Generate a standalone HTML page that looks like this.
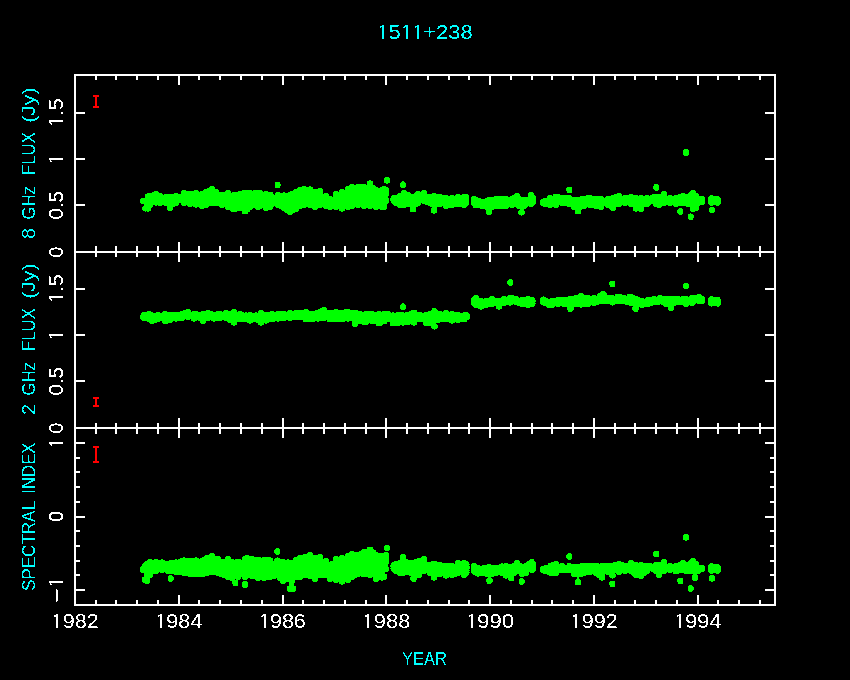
<!DOCTYPE html>
<html><head><meta charset="utf-8"><title>1511+238</title>
<style>
html,body{margin:0;padding:0;background:#000;}
body{width:850px;height:680px;overflow:hidden;}
svg{display:block;}
text{font-family:"Liberation Sans",sans-serif;}
</style></head><body>
<svg width="850" height="680" viewBox="0 0 850 680">
<rect width="850" height="680" fill="#000"/>
<g fill="#00ff00" shape-rendering="crispEdges">
<polygon points="140.0,201.0 143.0,201.0 145.6,201.0 148.0,197.0 150.0,196.0 156.0,194.4 160.0,196.4 166.0,197.4 170.0,197.4 173.0,197.0 176.0,196.4 184.0,193.4 190.0,194.4 196.0,193.4 202.0,194.4 206.0,192.4 212.0,189.4 216.0,192.4 222.0,195.0 228.0,193.4 234.0,195.4 240.0,194.4 245.0,193.0 250.0,193.4 258.0,193.4 266.0,194.4 270.0,195.0 278.0,195.4 284.0,195.8 290.0,195.4 296.0,192.4 300.0,190.4 304.0,189.4 310.0,189.8 315.0,192.4 320.0,191.4 326.0,196.4 330.0,199.4 336.0,194.4 342.0,192.4 348.0,189.4 352.0,187.4 358.0,187.4 364.0,187.4 370.0,183.8 376.0,190.4 382.0,190.4 384.0,189.4 387.0,190.4 389.4,192.4 389.4,193.6 387.0,200.6 384.0,206.6 382.0,206.6 376.0,206.6 370.0,205.6 364.0,205.6 358.0,204.6 352.0,205.6 348.0,206.6 342.0,208.2 336.0,206.6 330.0,206.6 326.0,205.6 320.0,204.6 315.0,206.6 310.0,204.6 304.0,204.6 300.0,205.6 296.0,208.6 290.0,211.6 284.0,207.6 278.0,204.6 270.0,206.6 266.0,207.6 258.0,206.6 250.0,206.6 245.0,211.0 240.0,207.6 234.0,209.0 228.0,206.6 222.0,204.6 216.0,203.0 212.0,202.6 206.0,204.6 202.0,205.6 196.0,204.2 190.0,203.6 184.0,202.6 176.0,202.6 173.0,203.6 170.0,207.6 166.0,202.6 160.0,202.6 156.0,202.2 150.0,204.6 148.0,208.2 145.6,208.2 143.0,201.0 140.0,201.0"/>
<circle cx="143.3" cy="201.0" r="3.3"/>
<circle cx="143.3" cy="201.0" r="3.3"/>
<circle cx="145.6" cy="200.9" r="3.3"/>
<circle cx="145.6" cy="208.3" r="3.3"/>
<circle cx="148.0" cy="196.9" r="3.3"/>
<circle cx="148.0" cy="208.3" r="3.3"/>
<circle cx="150.0" cy="195.9" r="3.3"/>
<circle cx="150.0" cy="204.7" r="3.3"/>
<circle cx="153.0" cy="195.6" r="3.3"/>
<circle cx="153.0" cy="200.1" r="3.3"/>
<circle cx="156.0" cy="194.3" r="3.3"/>
<circle cx="156.0" cy="202.3" r="3.3"/>
<circle cx="160.0" cy="196.3" r="3.3"/>
<circle cx="160.0" cy="202.7" r="3.3"/>
<circle cx="163.0" cy="200.2" r="3.3"/>
<circle cx="163.0" cy="202.2" r="3.3"/>
<circle cx="166.0" cy="197.3" r="3.3"/>
<circle cx="166.0" cy="202.7" r="3.3"/>
<circle cx="170.0" cy="197.3" r="3.3"/>
<circle cx="170.0" cy="207.7" r="3.3"/>
<circle cx="173.0" cy="196.9" r="3.3"/>
<circle cx="173.0" cy="203.7" r="3.3"/>
<circle cx="176.0" cy="196.3" r="3.3"/>
<circle cx="176.0" cy="202.7" r="3.3"/>
<circle cx="178.7" cy="196.8" r="3.3"/>
<circle cx="178.7" cy="199.3" r="3.3"/>
<circle cx="181.3" cy="196.8" r="3.3"/>
<circle cx="181.3" cy="199.3" r="3.3"/>
<circle cx="184.0" cy="193.3" r="3.3"/>
<circle cx="184.0" cy="202.7" r="3.3"/>
<circle cx="187.0" cy="193.8" r="3.3"/>
<circle cx="187.0" cy="199.8" r="3.3"/>
<circle cx="190.0" cy="194.3" r="3.3"/>
<circle cx="190.0" cy="203.7" r="3.3"/>
<circle cx="193.0" cy="193.8" r="3.3"/>
<circle cx="193.0" cy="201.5" r="3.3"/>
<circle cx="196.0" cy="193.3" r="3.3"/>
<circle cx="196.0" cy="204.3" r="3.3"/>
<circle cx="199.0" cy="195.3" r="3.3"/>
<circle cx="199.0" cy="201.6" r="3.3"/>
<circle cx="202.0" cy="194.3" r="3.3"/>
<circle cx="202.0" cy="205.7" r="3.3"/>
<circle cx="206.0" cy="192.3" r="3.3"/>
<circle cx="206.0" cy="204.7" r="3.3"/>
<circle cx="209.0" cy="191.3" r="3.3"/>
<circle cx="209.0" cy="203.2" r="3.3"/>
<circle cx="212.0" cy="189.3" r="3.3"/>
<circle cx="212.0" cy="202.7" r="3.3"/>
<circle cx="216.0" cy="192.3" r="3.3"/>
<circle cx="216.0" cy="203.1" r="3.3"/>
<circle cx="219.0" cy="196.1" r="3.3"/>
<circle cx="219.0" cy="200.5" r="3.3"/>
<circle cx="222.0" cy="194.9" r="3.3"/>
<circle cx="222.0" cy="204.7" r="3.3"/>
<circle cx="225.0" cy="197.5" r="3.3"/>
<circle cx="225.0" cy="203.2" r="3.3"/>
<circle cx="228.0" cy="193.3" r="3.3"/>
<circle cx="228.0" cy="206.7" r="3.3"/>
<circle cx="231.0" cy="196.8" r="3.3"/>
<circle cx="231.0" cy="207.4" r="3.3"/>
<circle cx="234.0" cy="195.3" r="3.3"/>
<circle cx="234.0" cy="209.1" r="3.3"/>
<circle cx="237.0" cy="195.3" r="3.3"/>
<circle cx="237.0" cy="207.9" r="3.3"/>
<circle cx="240.0" cy="194.3" r="3.3"/>
<circle cx="240.0" cy="207.7" r="3.3"/>
<circle cx="242.5" cy="197.0" r="3.3"/>
<circle cx="242.5" cy="206.9" r="3.3"/>
<circle cx="245.0" cy="192.9" r="3.3"/>
<circle cx="245.0" cy="211.1" r="3.3"/>
<circle cx="247.5" cy="193.1" r="3.3"/>
<circle cx="247.5" cy="208.9" r="3.3"/>
<circle cx="250.0" cy="193.3" r="3.3"/>
<circle cx="250.0" cy="206.7" r="3.3"/>
<circle cx="252.7" cy="193.8" r="3.3"/>
<circle cx="252.7" cy="203.3" r="3.3"/>
<circle cx="255.3" cy="193.3" r="3.3"/>
<circle cx="255.3" cy="205.2" r="3.3"/>
<circle cx="258.0" cy="193.3" r="3.3"/>
<circle cx="258.0" cy="206.7" r="3.3"/>
<circle cx="260.7" cy="193.6" r="3.3"/>
<circle cx="260.7" cy="205.5" r="3.3"/>
<circle cx="263.3" cy="196.5" r="3.3"/>
<circle cx="263.3" cy="204.0" r="3.3"/>
<circle cx="266.0" cy="194.3" r="3.3"/>
<circle cx="266.0" cy="207.7" r="3.3"/>
<circle cx="270.0" cy="194.9" r="3.3"/>
<circle cx="270.0" cy="206.7" r="3.3"/>
<circle cx="272.7" cy="197.5" r="3.3"/>
<circle cx="272.7" cy="203.5" r="3.3"/>
<circle cx="275.3" cy="197.7" r="3.3"/>
<circle cx="275.3" cy="202.0" r="3.3"/>
<circle cx="278.0" cy="195.3" r="3.3"/>
<circle cx="278.0" cy="204.7" r="3.3"/>
<circle cx="281.0" cy="198.0" r="3.3"/>
<circle cx="281.0" cy="205.7" r="3.3"/>
<circle cx="284.0" cy="195.7" r="3.3"/>
<circle cx="284.0" cy="207.7" r="3.3"/>
<circle cx="287.0" cy="197.0" r="3.3"/>
<circle cx="287.0" cy="209.7" r="3.3"/>
<circle cx="290.0" cy="195.3" r="3.3"/>
<circle cx="290.0" cy="211.7" r="3.3"/>
<circle cx="293.0" cy="193.8" r="3.3"/>
<circle cx="293.0" cy="209.7" r="3.3"/>
<circle cx="296.0" cy="192.3" r="3.3"/>
<circle cx="296.0" cy="208.7" r="3.3"/>
<circle cx="300.0" cy="190.3" r="3.3"/>
<circle cx="300.0" cy="205.7" r="3.3"/>
<circle cx="304.0" cy="189.3" r="3.3"/>
<circle cx="304.0" cy="204.7" r="3.3"/>
<circle cx="307.0" cy="192.0" r="3.3"/>
<circle cx="307.0" cy="204.2" r="3.3"/>
<circle cx="310.0" cy="189.7" r="3.3"/>
<circle cx="310.0" cy="204.7" r="3.3"/>
<circle cx="312.5" cy="192.5" r="3.3"/>
<circle cx="312.5" cy="203.2" r="3.3"/>
<circle cx="315.0" cy="192.3" r="3.3"/>
<circle cx="315.0" cy="206.7" r="3.3"/>
<circle cx="317.5" cy="193.3" r="3.3"/>
<circle cx="317.5" cy="203.2" r="3.3"/>
<circle cx="320.0" cy="191.3" r="3.3"/>
<circle cx="320.0" cy="204.7" r="3.3"/>
<circle cx="323.0" cy="197.2" r="3.3"/>
<circle cx="323.0" cy="202.7" r="3.3"/>
<circle cx="326.0" cy="196.3" r="3.3"/>
<circle cx="326.0" cy="205.7" r="3.3"/>
<circle cx="330.0" cy="199.3" r="3.3"/>
<circle cx="330.0" cy="206.7" r="3.3"/>
<circle cx="333.0" cy="200.2" r="3.3"/>
<circle cx="333.0" cy="205.2" r="3.3"/>
<circle cx="336.0" cy="194.3" r="3.3"/>
<circle cx="336.0" cy="206.7" r="3.3"/>
<circle cx="339.0" cy="196.7" r="3.3"/>
<circle cx="339.0" cy="204.1" r="3.3"/>
<circle cx="342.0" cy="192.3" r="3.3"/>
<circle cx="342.0" cy="208.3" r="3.3"/>
<circle cx="345.0" cy="193.3" r="3.3"/>
<circle cx="345.0" cy="204.1" r="3.3"/>
<circle cx="348.0" cy="189.3" r="3.3"/>
<circle cx="348.0" cy="206.7" r="3.3"/>
<circle cx="352.0" cy="187.3" r="3.3"/>
<circle cx="352.0" cy="205.7" r="3.3"/>
<circle cx="355.0" cy="187.8" r="3.3"/>
<circle cx="355.0" cy="203.7" r="3.3"/>
<circle cx="358.0" cy="187.3" r="3.3"/>
<circle cx="358.0" cy="204.7" r="3.3"/>
<circle cx="361.0" cy="187.3" r="3.3"/>
<circle cx="361.0" cy="203.7" r="3.3"/>
<circle cx="364.0" cy="187.3" r="3.3"/>
<circle cx="364.0" cy="205.7" r="3.3"/>
<circle cx="367.0" cy="188.9" r="3.3"/>
<circle cx="367.0" cy="205.2" r="3.3"/>
<circle cx="370.0" cy="183.7" r="3.3"/>
<circle cx="370.0" cy="205.7" r="3.3"/>
<circle cx="373.0" cy="188.5" r="3.3"/>
<circle cx="373.0" cy="202.8" r="3.3"/>
<circle cx="376.0" cy="190.3" r="3.3"/>
<circle cx="376.0" cy="206.7" r="3.3"/>
<circle cx="379.0" cy="193.7" r="3.3"/>
<circle cx="379.0" cy="203.3" r="3.3"/>
<circle cx="382.0" cy="190.3" r="3.3"/>
<circle cx="382.0" cy="206.7" r="3.3"/>
<circle cx="384.0" cy="189.3" r="3.3"/>
<circle cx="384.0" cy="206.7" r="3.3"/>
<circle cx="386.1" cy="190.3" r="3.3"/>
<circle cx="386.1" cy="200.7" r="3.3"/>
<circle cx="386.1" cy="192.3" r="3.3"/>
<circle cx="386.1" cy="193.7" r="3.3"/>
<polygon points="390.4,198.4 396.0,198.4 400.0,196.4 404.0,193.4 408.0,195.4 410.6,197.0 413.0,197.4 416.0,196.4 418.0,194.4 424.0,193.4 430.0,197.4 432.0,197.0 434.0,196.4 436.6,197.0 440.0,197.4 446.0,198.4 452.0,198.4 458.0,197.4 464.0,197.4 468.0,197.4 469.2,199.4 469.2,200.6 468.0,202.6 464.0,204.6 458.0,203.6 452.0,204.6 446.0,205.6 440.0,203.6 436.6,204.2 434.0,210.2 432.0,203.6 430.0,202.6 424.0,200.6 418.0,202.6 416.0,203.6 413.0,209.0 410.6,203.6 408.0,203.6 404.0,204.6 400.0,204.6 396.0,202.6 390.4,199.6"/>
<circle cx="393.7" cy="198.3" r="3.3"/>
<circle cx="393.7" cy="199.7" r="3.3"/>
<circle cx="393.7" cy="198.3" r="3.3"/>
<circle cx="393.7" cy="200.7" r="3.3"/>
<circle cx="396.0" cy="198.3" r="3.3"/>
<circle cx="396.0" cy="202.7" r="3.3"/>
<circle cx="400.0" cy="196.3" r="3.3"/>
<circle cx="400.0" cy="204.7" r="3.3"/>
<circle cx="404.0" cy="193.3" r="3.3"/>
<circle cx="404.0" cy="204.7" r="3.3"/>
<circle cx="408.0" cy="195.3" r="3.3"/>
<circle cx="408.0" cy="203.7" r="3.3"/>
<circle cx="410.6" cy="196.9" r="3.3"/>
<circle cx="410.6" cy="203.7" r="3.3"/>
<circle cx="413.0" cy="197.3" r="3.3"/>
<circle cx="413.0" cy="209.1" r="3.3"/>
<circle cx="416.0" cy="196.3" r="3.3"/>
<circle cx="416.0" cy="203.7" r="3.3"/>
<circle cx="418.0" cy="194.3" r="3.3"/>
<circle cx="418.0" cy="202.7" r="3.3"/>
<circle cx="421.0" cy="197.2" r="3.3"/>
<circle cx="421.0" cy="200.2" r="3.3"/>
<circle cx="424.0" cy="193.3" r="3.3"/>
<circle cx="424.0" cy="200.7" r="3.3"/>
<circle cx="427.0" cy="196.8" r="3.3"/>
<circle cx="427.0" cy="201.7" r="3.3"/>
<circle cx="430.0" cy="197.3" r="3.3"/>
<circle cx="430.0" cy="202.7" r="3.3"/>
<circle cx="432.0" cy="196.9" r="3.3"/>
<circle cx="432.0" cy="203.7" r="3.3"/>
<circle cx="434.0" cy="196.3" r="3.3"/>
<circle cx="434.0" cy="210.3" r="3.3"/>
<circle cx="436.6" cy="196.9" r="3.3"/>
<circle cx="436.6" cy="204.3" r="3.3"/>
<circle cx="440.0" cy="197.3" r="3.3"/>
<circle cx="440.0" cy="203.7" r="3.3"/>
<circle cx="443.0" cy="197.8" r="3.3"/>
<circle cx="443.0" cy="202.2" r="3.3"/>
<circle cx="446.0" cy="198.3" r="3.3"/>
<circle cx="446.0" cy="205.7" r="3.3"/>
<circle cx="449.0" cy="200.8" r="3.3"/>
<circle cx="449.0" cy="205.2" r="3.3"/>
<circle cx="452.0" cy="198.3" r="3.3"/>
<circle cx="452.0" cy="204.7" r="3.3"/>
<circle cx="455.0" cy="199.3" r="3.3"/>
<circle cx="455.0" cy="204.2" r="3.3"/>
<circle cx="458.0" cy="197.3" r="3.3"/>
<circle cx="458.0" cy="203.7" r="3.3"/>
<circle cx="461.0" cy="199.8" r="3.3"/>
<circle cx="461.0" cy="203.7" r="3.3"/>
<circle cx="464.0" cy="197.3" r="3.3"/>
<circle cx="464.0" cy="204.7" r="3.3"/>
<circle cx="465.9" cy="197.3" r="3.3"/>
<circle cx="465.9" cy="202.7" r="3.3"/>
<circle cx="465.9" cy="199.3" r="3.3"/>
<circle cx="465.9" cy="200.7" r="3.3"/>
<polygon points="471.0,201.0 472.0,199.4 476.0,200.4 482.0,202.4 487.0,201.4 489.0,200.4 492.0,200.4 496.0,199.4 502.0,199.0 506.0,199.4 512.0,199.4 517.0,196.4 519.0,199.4 521.6,200.4 524.4,200.4 526.0,200.4 531.0,195.4 535.0,198.4 536.0,200.0 536.0,200.0 535.0,201.6 531.0,203.6 526.0,203.6 524.4,205.6 521.6,212.2 519.0,205.6 517.0,203.6 512.0,204.6 506.0,205.6 502.0,205.6 496.0,205.6 492.0,206.6 489.0,211.6 487.0,206.6 482.0,205.6 476.0,205.0 472.0,202.6 471.0,201.0"/>
<circle cx="474.3" cy="201.0" r="3.3"/>
<circle cx="474.3" cy="199.3" r="3.3"/>
<circle cx="474.3" cy="202.7" r="3.3"/>
<circle cx="476.0" cy="200.3" r="3.3"/>
<circle cx="476.0" cy="205.1" r="3.3"/>
<circle cx="479.0" cy="201.3" r="3.3"/>
<circle cx="479.0" cy="203.9" r="3.3"/>
<circle cx="482.0" cy="202.3" r="3.3"/>
<circle cx="482.0" cy="205.7" r="3.3"/>
<circle cx="484.5" cy="204.3" r="3.3"/>
<circle cx="484.5" cy="203.7" r="3.3"/>
<circle cx="487.0" cy="201.3" r="3.3"/>
<circle cx="487.0" cy="206.7" r="3.3"/>
<circle cx="489.0" cy="200.3" r="3.3"/>
<circle cx="489.0" cy="211.7" r="3.3"/>
<circle cx="492.0" cy="200.3" r="3.3"/>
<circle cx="492.0" cy="206.7" r="3.3"/>
<circle cx="496.0" cy="199.3" r="3.3"/>
<circle cx="496.0" cy="205.7" r="3.3"/>
<circle cx="499.0" cy="199.1" r="3.3"/>
<circle cx="499.0" cy="205.7" r="3.3"/>
<circle cx="502.0" cy="198.9" r="3.3"/>
<circle cx="502.0" cy="205.7" r="3.3"/>
<circle cx="506.0" cy="199.3" r="3.3"/>
<circle cx="506.0" cy="205.7" r="3.3"/>
<circle cx="509.0" cy="202.7" r="3.3"/>
<circle cx="509.0" cy="201.8" r="3.3"/>
<circle cx="512.0" cy="199.3" r="3.3"/>
<circle cx="512.0" cy="204.7" r="3.3"/>
<circle cx="514.5" cy="197.8" r="3.3"/>
<circle cx="514.5" cy="201.7" r="3.3"/>
<circle cx="517.0" cy="196.3" r="3.3"/>
<circle cx="517.0" cy="203.7" r="3.3"/>
<circle cx="519.0" cy="199.3" r="3.3"/>
<circle cx="519.0" cy="205.7" r="3.3"/>
<circle cx="521.6" cy="200.3" r="3.3"/>
<circle cx="521.6" cy="212.3" r="3.3"/>
<circle cx="524.4" cy="200.3" r="3.3"/>
<circle cx="524.4" cy="205.7" r="3.3"/>
<circle cx="526.0" cy="200.3" r="3.3"/>
<circle cx="526.0" cy="203.7" r="3.3"/>
<circle cx="528.5" cy="201.2" r="3.3"/>
<circle cx="528.5" cy="202.2" r="3.3"/>
<circle cx="531.0" cy="195.3" r="3.3"/>
<circle cx="531.0" cy="203.7" r="3.3"/>
<circle cx="532.7" cy="198.3" r="3.3"/>
<circle cx="532.7" cy="201.7" r="3.3"/>
<circle cx="532.7" cy="200.0" r="3.3"/>
<polygon points="540.0,202.5 540.4,202.4 545.0,201.4 550.0,198.4 556.0,197.0 562.0,198.4 569.4,198.4 574.0,200.4 575.6,200.4 578.0,200.4 580.4,199.8 584.0,199.0 590.0,198.4 596.0,199.0 601.0,199.4 608.0,199.4 613.0,198.4 619.0,196.4 625.0,198.4 631.0,197.4 636.0,198.4 640.0,199.4 641.0,198.4 647.0,198.4 656.0,197.4 659.0,197.4 664.0,194.4 670.0,198.4 676.0,198.4 680.0,197.4 683.0,196.4 688.0,197.4 691.0,195.4 693.0,193.4 696.0,196.4 698.0,199.4 702.0,199.4 705.0,200.0 705.0,200.0 702.0,201.6 698.0,202.6 696.0,207.6 693.0,208.6 691.0,203.6 688.0,203.6 683.0,202.6 680.0,202.6 676.0,203.6 670.0,202.6 664.0,202.6 659.0,204.6 656.0,203.6 647.0,203.6 641.0,208.6 640.0,208.2 636.0,208.2 631.0,203.6 625.0,202.6 619.0,203.6 613.0,207.6 608.0,204.6 601.0,206.6 596.0,205.6 590.0,204.6 584.0,205.6 580.4,206.6 578.0,211.0 575.6,206.6 574.0,206.6 569.4,203.6 562.0,202.6 556.0,204.6 550.0,204.6 545.0,203.6 540.4,202.6 540.0,202.5"/>
<circle cx="543.3" cy="202.5" r="3.3"/>
<circle cx="543.3" cy="202.3" r="3.3"/>
<circle cx="543.3" cy="202.7" r="3.3"/>
<circle cx="545.0" cy="201.3" r="3.3"/>
<circle cx="545.0" cy="203.7" r="3.3"/>
<circle cx="547.5" cy="203.2" r="3.3"/>
<circle cx="547.5" cy="202.7" r="3.3"/>
<circle cx="550.0" cy="198.3" r="3.3"/>
<circle cx="550.0" cy="204.7" r="3.3"/>
<circle cx="553.0" cy="201.0" r="3.3"/>
<circle cx="553.0" cy="204.2" r="3.3"/>
<circle cx="556.0" cy="196.9" r="3.3"/>
<circle cx="556.0" cy="204.7" r="3.3"/>
<circle cx="559.0" cy="197.6" r="3.3"/>
<circle cx="559.0" cy="202.2" r="3.3"/>
<circle cx="562.0" cy="198.3" r="3.3"/>
<circle cx="562.0" cy="202.7" r="3.3"/>
<circle cx="565.7" cy="198.3" r="3.3"/>
<circle cx="565.7" cy="203.2" r="3.3"/>
<circle cx="569.4" cy="198.3" r="3.3"/>
<circle cx="569.4" cy="203.7" r="3.3"/>
<circle cx="574.0" cy="200.3" r="3.3"/>
<circle cx="574.0" cy="206.7" r="3.3"/>
<circle cx="575.6" cy="200.3" r="3.3"/>
<circle cx="575.6" cy="206.7" r="3.3"/>
<circle cx="578.0" cy="200.3" r="3.3"/>
<circle cx="578.0" cy="211.1" r="3.3"/>
<circle cx="580.4" cy="199.7" r="3.3"/>
<circle cx="580.4" cy="206.7" r="3.3"/>
<circle cx="584.0" cy="198.9" r="3.3"/>
<circle cx="584.0" cy="205.7" r="3.3"/>
<circle cx="587.0" cy="198.6" r="3.3"/>
<circle cx="587.0" cy="201.8" r="3.3"/>
<circle cx="590.0" cy="198.3" r="3.3"/>
<circle cx="590.0" cy="204.7" r="3.3"/>
<circle cx="593.0" cy="202.0" r="3.3"/>
<circle cx="593.0" cy="205.2" r="3.3"/>
<circle cx="596.0" cy="198.9" r="3.3"/>
<circle cx="596.0" cy="205.7" r="3.3"/>
<circle cx="598.5" cy="199.6" r="3.3"/>
<circle cx="598.5" cy="203.7" r="3.3"/>
<circle cx="601.0" cy="199.3" r="3.3"/>
<circle cx="601.0" cy="206.7" r="3.3"/>
<circle cx="604.5" cy="200.8" r="3.3"/>
<circle cx="604.5" cy="202.3" r="3.3"/>
<circle cx="608.0" cy="199.3" r="3.3"/>
<circle cx="608.0" cy="204.7" r="3.3"/>
<circle cx="610.5" cy="200.3" r="3.3"/>
<circle cx="610.5" cy="205.7" r="3.3"/>
<circle cx="613.0" cy="198.3" r="3.3"/>
<circle cx="613.0" cy="207.7" r="3.3"/>
<circle cx="616.0" cy="197.3" r="3.3"/>
<circle cx="616.0" cy="204.2" r="3.3"/>
<circle cx="619.0" cy="196.3" r="3.3"/>
<circle cx="619.0" cy="203.7" r="3.3"/>
<circle cx="622.0" cy="198.8" r="3.3"/>
<circle cx="622.0" cy="201.7" r="3.3"/>
<circle cx="625.0" cy="198.3" r="3.3"/>
<circle cx="625.0" cy="202.7" r="3.3"/>
<circle cx="628.0" cy="198.3" r="3.3"/>
<circle cx="628.0" cy="200.7" r="3.3"/>
<circle cx="631.0" cy="197.3" r="3.3"/>
<circle cx="631.0" cy="203.7" r="3.3"/>
<circle cx="633.5" cy="200.3" r="3.3"/>
<circle cx="633.5" cy="203.5" r="3.3"/>
<circle cx="636.0" cy="198.3" r="3.3"/>
<circle cx="636.0" cy="208.3" r="3.3"/>
<circle cx="640.0" cy="199.3" r="3.3"/>
<circle cx="640.0" cy="208.3" r="3.3"/>
<circle cx="641.0" cy="198.3" r="3.3"/>
<circle cx="641.0" cy="208.7" r="3.3"/>
<circle cx="644.0" cy="201.7" r="3.3"/>
<circle cx="644.0" cy="203.7" r="3.3"/>
<circle cx="647.0" cy="198.3" r="3.3"/>
<circle cx="647.0" cy="203.7" r="3.3"/>
<circle cx="650.0" cy="201.4" r="3.3"/>
<circle cx="650.0" cy="200.3" r="3.3"/>
<circle cx="653.0" cy="197.6" r="3.3"/>
<circle cx="653.0" cy="200.3" r="3.3"/>
<circle cx="656.0" cy="197.3" r="3.3"/>
<circle cx="656.0" cy="203.7" r="3.3"/>
<circle cx="659.0" cy="197.3" r="3.3"/>
<circle cx="659.0" cy="204.7" r="3.3"/>
<circle cx="661.5" cy="199.2" r="3.3"/>
<circle cx="661.5" cy="202.2" r="3.3"/>
<circle cx="664.0" cy="194.3" r="3.3"/>
<circle cx="664.0" cy="202.7" r="3.3"/>
<circle cx="667.0" cy="198.8" r="3.3"/>
<circle cx="667.0" cy="202.2" r="3.3"/>
<circle cx="670.0" cy="198.3" r="3.3"/>
<circle cx="670.0" cy="202.7" r="3.3"/>
<circle cx="673.0" cy="199.8" r="3.3"/>
<circle cx="673.0" cy="200.7" r="3.3"/>
<circle cx="676.0" cy="198.3" r="3.3"/>
<circle cx="676.0" cy="203.7" r="3.3"/>
<circle cx="680.0" cy="197.3" r="3.3"/>
<circle cx="680.0" cy="202.7" r="3.3"/>
<circle cx="683.0" cy="196.3" r="3.3"/>
<circle cx="683.0" cy="202.7" r="3.3"/>
<circle cx="685.5" cy="198.3" r="3.3"/>
<circle cx="685.5" cy="199.8" r="3.3"/>
<circle cx="688.0" cy="197.3" r="3.3"/>
<circle cx="688.0" cy="203.7" r="3.3"/>
<circle cx="691.0" cy="195.3" r="3.3"/>
<circle cx="691.0" cy="203.7" r="3.3"/>
<circle cx="693.0" cy="193.3" r="3.3"/>
<circle cx="693.0" cy="208.7" r="3.3"/>
<circle cx="696.0" cy="196.3" r="3.3"/>
<circle cx="696.0" cy="207.7" r="3.3"/>
<circle cx="698.0" cy="199.3" r="3.3"/>
<circle cx="698.0" cy="202.7" r="3.3"/>
<circle cx="701.7" cy="199.3" r="3.3"/>
<circle cx="701.7" cy="201.7" r="3.3"/>
<circle cx="701.7" cy="200.0" r="3.3"/>
<polygon points="140.0,317.0 144.0,315.4 149.0,314.4 152.0,315.8 158.0,315.4 165.0,314.4 170.0,315.0 176.0,315.0 182.0,314.4 188.0,312.4 194.0,314.4 200.0,315.4 203.0,314.4 208.0,313.4 214.0,315.0 220.0,314.4 226.0,313.4 230.0,314.4 234.0,312.4 240.0,314.4 246.0,315.8 250.0,315.4 256.0,315.8 261.0,313.4 266.0,315.0 272.0,314.4 278.0,314.4 284.0,314.4 290.0,313.4 296.0,313.4 300.0,313.0 306.0,312.4 312.0,314.4 318.0,313.0 324.0,310.4 330.0,313.0 336.0,312.4 342.0,313.0 348.0,312.4 355.0,313.0 360.0,314.4 366.0,314.4 372.0,314.4 379.0,314.4 384.0,314.4 388.0,314.4 389.6,315.8 393.0,315.8 398.0,315.4 403.0,315.8 408.0,315.0 414.0,313.0 420.0,315.4 426.0,315.4 430.0,314.4 434.4,311.4 440.0,314.4 446.0,313.4 452.0,314.4 458.0,315.4 464.0,315.8 469.0,316.4 470.0,316.7 470.0,316.7 469.0,316.6 464.0,319.0 458.0,319.6 452.0,320.2 446.0,319.0 440.0,319.0 434.4,326.2 430.0,322.6 426.0,322.6 420.0,319.0 414.0,322.2 408.0,321.6 403.0,322.2 398.0,322.6 393.0,323.0 389.6,319.0 388.0,319.0 384.0,321.0 379.0,323.0 372.0,320.6 366.0,321.6 360.0,321.0 355.0,323.6 348.0,318.2 342.0,319.0 336.0,319.0 330.0,319.0 324.0,317.6 318.0,318.2 312.0,319.0 306.0,319.0 300.0,316.6 296.0,317.0 290.0,317.6 284.0,317.6 278.0,318.2 272.0,319.0 266.0,320.2 261.0,322.2 256.0,319.0 250.0,320.2 246.0,319.0 240.0,319.0 234.0,322.2 230.0,319.6 226.0,317.6 220.0,317.6 214.0,318.2 208.0,317.6 203.0,320.6 200.0,317.6 194.0,318.2 188.0,316.6 182.0,317.6 176.0,318.2 170.0,319.6 165.0,320.6 158.0,318.6 152.0,320.6 149.0,318.6 144.0,317.6 140.0,317.0"/>
<circle cx="143.3" cy="317.0" r="3.3"/>
<circle cx="144.0" cy="315.3" r="3.3"/>
<circle cx="144.0" cy="317.7" r="3.3"/>
<circle cx="146.5" cy="316.3" r="3.3"/>
<circle cx="146.5" cy="314.8" r="3.3"/>
<circle cx="149.0" cy="314.3" r="3.3"/>
<circle cx="149.0" cy="318.7" r="3.3"/>
<circle cx="152.0" cy="315.7" r="3.3"/>
<circle cx="152.0" cy="320.7" r="3.3"/>
<circle cx="155.0" cy="317.0" r="3.3"/>
<circle cx="155.0" cy="319.7" r="3.3"/>
<circle cx="158.0" cy="315.3" r="3.3"/>
<circle cx="158.0" cy="318.7" r="3.3"/>
<circle cx="161.5" cy="317.3" r="3.3"/>
<circle cx="161.5" cy="316.3" r="3.3"/>
<circle cx="165.0" cy="314.3" r="3.3"/>
<circle cx="165.0" cy="320.7" r="3.3"/>
<circle cx="167.5" cy="316.1" r="3.3"/>
<circle cx="167.5" cy="320.2" r="3.3"/>
<circle cx="170.0" cy="314.9" r="3.3"/>
<circle cx="170.0" cy="319.7" r="3.3"/>
<circle cx="173.0" cy="317.4" r="3.3"/>
<circle cx="173.0" cy="315.6" r="3.3"/>
<circle cx="176.0" cy="314.9" r="3.3"/>
<circle cx="176.0" cy="318.3" r="3.3"/>
<circle cx="179.0" cy="318.0" r="3.3"/>
<circle cx="179.0" cy="317.5" r="3.3"/>
<circle cx="182.0" cy="314.3" r="3.3"/>
<circle cx="182.0" cy="317.7" r="3.3"/>
<circle cx="185.0" cy="313.3" r="3.3"/>
<circle cx="185.0" cy="315.7" r="3.3"/>
<circle cx="188.0" cy="312.3" r="3.3"/>
<circle cx="188.0" cy="316.7" r="3.3"/>
<circle cx="191.0" cy="315.8" r="3.3"/>
<circle cx="191.0" cy="316.0" r="3.3"/>
<circle cx="194.0" cy="314.3" r="3.3"/>
<circle cx="194.0" cy="318.3" r="3.3"/>
<circle cx="197.0" cy="316.3" r="3.3"/>
<circle cx="197.0" cy="314.6" r="3.3"/>
<circle cx="200.0" cy="315.3" r="3.3"/>
<circle cx="200.0" cy="317.7" r="3.3"/>
<circle cx="203.0" cy="314.3" r="3.3"/>
<circle cx="203.0" cy="320.7" r="3.3"/>
<circle cx="205.5" cy="315.3" r="3.3"/>
<circle cx="205.5" cy="316.7" r="3.3"/>
<circle cx="208.0" cy="313.3" r="3.3"/>
<circle cx="208.0" cy="317.7" r="3.3"/>
<circle cx="211.0" cy="314.1" r="3.3"/>
<circle cx="211.0" cy="314.6" r="3.3"/>
<circle cx="214.0" cy="314.9" r="3.3"/>
<circle cx="214.0" cy="318.3" r="3.3"/>
<circle cx="217.0" cy="314.6" r="3.3"/>
<circle cx="217.0" cy="318.0" r="3.3"/>
<circle cx="220.0" cy="314.3" r="3.3"/>
<circle cx="220.0" cy="317.7" r="3.3"/>
<circle cx="223.0" cy="315.3" r="3.3"/>
<circle cx="223.0" cy="316.2" r="3.3"/>
<circle cx="226.0" cy="313.3" r="3.3"/>
<circle cx="226.0" cy="317.7" r="3.3"/>
<circle cx="230.0" cy="314.3" r="3.3"/>
<circle cx="230.0" cy="319.7" r="3.3"/>
<circle cx="234.0" cy="312.3" r="3.3"/>
<circle cx="234.0" cy="322.3" r="3.3"/>
<circle cx="237.0" cy="315.8" r="3.3"/>
<circle cx="237.0" cy="319.2" r="3.3"/>
<circle cx="240.0" cy="314.3" r="3.3"/>
<circle cx="240.0" cy="319.1" r="3.3"/>
<circle cx="243.0" cy="318.4" r="3.3"/>
<circle cx="243.0" cy="315.7" r="3.3"/>
<circle cx="246.0" cy="315.7" r="3.3"/>
<circle cx="246.0" cy="319.1" r="3.3"/>
<circle cx="250.0" cy="315.3" r="3.3"/>
<circle cx="250.0" cy="320.3" r="3.3"/>
<circle cx="253.0" cy="317.0" r="3.3"/>
<circle cx="253.0" cy="319.2" r="3.3"/>
<circle cx="256.0" cy="315.7" r="3.3"/>
<circle cx="256.0" cy="319.1" r="3.3"/>
<circle cx="258.5" cy="316.0" r="3.3"/>
<circle cx="258.5" cy="320.2" r="3.3"/>
<circle cx="261.0" cy="313.3" r="3.3"/>
<circle cx="261.0" cy="322.3" r="3.3"/>
<circle cx="263.5" cy="315.6" r="3.3"/>
<circle cx="263.5" cy="319.8" r="3.3"/>
<circle cx="266.0" cy="314.9" r="3.3"/>
<circle cx="266.0" cy="320.3" r="3.3"/>
<circle cx="269.0" cy="318.0" r="3.3"/>
<circle cx="269.0" cy="318.2" r="3.3"/>
<circle cx="272.0" cy="314.3" r="3.3"/>
<circle cx="272.0" cy="319.1" r="3.3"/>
<circle cx="275.0" cy="315.8" r="3.3"/>
<circle cx="275.0" cy="316.2" r="3.3"/>
<circle cx="278.0" cy="314.3" r="3.3"/>
<circle cx="278.0" cy="318.3" r="3.3"/>
<circle cx="281.0" cy="314.3" r="3.3"/>
<circle cx="281.0" cy="318.0" r="3.3"/>
<circle cx="284.0" cy="314.3" r="3.3"/>
<circle cx="284.0" cy="317.7" r="3.3"/>
<circle cx="287.0" cy="317.2" r="3.3"/>
<circle cx="287.0" cy="317.2" r="3.3"/>
<circle cx="290.0" cy="313.3" r="3.3"/>
<circle cx="290.0" cy="317.7" r="3.3"/>
<circle cx="293.0" cy="314.8" r="3.3"/>
<circle cx="293.0" cy="314.0" r="3.3"/>
<circle cx="296.0" cy="313.3" r="3.3"/>
<circle cx="296.0" cy="317.1" r="3.3"/>
<circle cx="300.0" cy="312.9" r="3.3"/>
<circle cx="300.0" cy="316.7" r="3.3"/>
<circle cx="303.0" cy="313.1" r="3.3"/>
<circle cx="303.0" cy="316.4" r="3.3"/>
<circle cx="306.0" cy="312.3" r="3.3"/>
<circle cx="306.0" cy="319.1" r="3.3"/>
<circle cx="309.0" cy="313.8" r="3.3"/>
<circle cx="309.0" cy="317.6" r="3.3"/>
<circle cx="312.0" cy="314.3" r="3.3"/>
<circle cx="312.0" cy="319.1" r="3.3"/>
<circle cx="315.0" cy="314.1" r="3.3"/>
<circle cx="315.0" cy="316.2" r="3.3"/>
<circle cx="318.0" cy="312.9" r="3.3"/>
<circle cx="318.0" cy="318.3" r="3.3"/>
<circle cx="321.0" cy="311.6" r="3.3"/>
<circle cx="321.0" cy="318.0" r="3.3"/>
<circle cx="324.0" cy="310.3" r="3.3"/>
<circle cx="324.0" cy="317.7" r="3.3"/>
<circle cx="327.0" cy="315.0" r="3.3"/>
<circle cx="327.0" cy="316.9" r="3.3"/>
<circle cx="330.0" cy="312.9" r="3.3"/>
<circle cx="330.0" cy="319.1" r="3.3"/>
<circle cx="333.0" cy="314.1" r="3.3"/>
<circle cx="333.0" cy="318.6" r="3.3"/>
<circle cx="336.0" cy="312.3" r="3.3"/>
<circle cx="336.0" cy="319.1" r="3.3"/>
<circle cx="339.0" cy="315.1" r="3.3"/>
<circle cx="339.0" cy="318.6" r="3.3"/>
<circle cx="342.0" cy="312.9" r="3.3"/>
<circle cx="342.0" cy="319.1" r="3.3"/>
<circle cx="345.0" cy="312.6" r="3.3"/>
<circle cx="345.0" cy="317.2" r="3.3"/>
<circle cx="348.0" cy="312.3" r="3.3"/>
<circle cx="348.0" cy="318.3" r="3.3"/>
<circle cx="351.5" cy="313.1" r="3.3"/>
<circle cx="351.5" cy="317.6" r="3.3"/>
<circle cx="355.0" cy="312.9" r="3.3"/>
<circle cx="355.0" cy="323.7" r="3.3"/>
<circle cx="357.5" cy="316.1" r="3.3"/>
<circle cx="357.5" cy="320.9" r="3.3"/>
<circle cx="360.0" cy="314.3" r="3.3"/>
<circle cx="360.0" cy="321.1" r="3.3"/>
<circle cx="363.0" cy="314.8" r="3.3"/>
<circle cx="363.0" cy="321.4" r="3.3"/>
<circle cx="366.0" cy="314.3" r="3.3"/>
<circle cx="366.0" cy="321.7" r="3.3"/>
<circle cx="369.0" cy="314.3" r="3.3"/>
<circle cx="369.0" cy="317.8" r="3.3"/>
<circle cx="372.0" cy="314.3" r="3.3"/>
<circle cx="372.0" cy="320.7" r="3.3"/>
<circle cx="375.5" cy="314.8" r="3.3"/>
<circle cx="375.5" cy="320.4" r="3.3"/>
<circle cx="379.0" cy="314.3" r="3.3"/>
<circle cx="379.0" cy="323.1" r="3.3"/>
<circle cx="381.5" cy="317.7" r="3.3"/>
<circle cx="381.5" cy="321.6" r="3.3"/>
<circle cx="384.0" cy="314.3" r="3.3"/>
<circle cx="384.0" cy="321.1" r="3.3"/>
<circle cx="388.0" cy="314.3" r="3.3"/>
<circle cx="388.0" cy="319.1" r="3.3"/>
<circle cx="389.6" cy="315.7" r="3.3"/>
<circle cx="389.6" cy="319.1" r="3.3"/>
<circle cx="393.0" cy="315.7" r="3.3"/>
<circle cx="393.0" cy="323.1" r="3.3"/>
<circle cx="395.5" cy="317.0" r="3.3"/>
<circle cx="395.5" cy="321.4" r="3.3"/>
<circle cx="398.0" cy="315.3" r="3.3"/>
<circle cx="398.0" cy="322.7" r="3.3"/>
<circle cx="400.5" cy="315.5" r="3.3"/>
<circle cx="400.5" cy="319.1" r="3.3"/>
<circle cx="403.0" cy="315.7" r="3.3"/>
<circle cx="403.0" cy="322.3" r="3.3"/>
<circle cx="405.5" cy="316.8" r="3.3"/>
<circle cx="405.5" cy="318.6" r="3.3"/>
<circle cx="408.0" cy="314.9" r="3.3"/>
<circle cx="408.0" cy="321.7" r="3.3"/>
<circle cx="411.0" cy="314.4" r="3.3"/>
<circle cx="411.0" cy="319.5" r="3.3"/>
<circle cx="414.0" cy="312.9" r="3.3"/>
<circle cx="414.0" cy="322.3" r="3.3"/>
<circle cx="417.0" cy="315.6" r="3.3"/>
<circle cx="417.0" cy="317.3" r="3.3"/>
<circle cx="420.0" cy="315.3" r="3.3"/>
<circle cx="420.0" cy="319.1" r="3.3"/>
<circle cx="423.0" cy="316.8" r="3.3"/>
<circle cx="423.0" cy="318.4" r="3.3"/>
<circle cx="426.0" cy="315.3" r="3.3"/>
<circle cx="426.0" cy="322.7" r="3.3"/>
<circle cx="430.0" cy="314.3" r="3.3"/>
<circle cx="430.0" cy="322.7" r="3.3"/>
<circle cx="434.4" cy="311.3" r="3.3"/>
<circle cx="434.4" cy="326.3" r="3.3"/>
<circle cx="437.2" cy="314.3" r="3.3"/>
<circle cx="437.2" cy="320.2" r="3.3"/>
<circle cx="440.0" cy="314.3" r="3.3"/>
<circle cx="440.0" cy="319.1" r="3.3"/>
<circle cx="443.0" cy="315.3" r="3.3"/>
<circle cx="443.0" cy="316.6" r="3.3"/>
<circle cx="446.0" cy="313.3" r="3.3"/>
<circle cx="446.0" cy="319.1" r="3.3"/>
<circle cx="449.0" cy="317.2" r="3.3"/>
<circle cx="449.0" cy="317.2" r="3.3"/>
<circle cx="452.0" cy="314.3" r="3.3"/>
<circle cx="452.0" cy="320.3" r="3.3"/>
<circle cx="455.0" cy="314.8" r="3.3"/>
<circle cx="455.0" cy="317.5" r="3.3"/>
<circle cx="458.0" cy="315.3" r="3.3"/>
<circle cx="458.0" cy="319.7" r="3.3"/>
<circle cx="461.0" cy="316.0" r="3.3"/>
<circle cx="461.0" cy="318.9" r="3.3"/>
<circle cx="464.0" cy="315.7" r="3.3"/>
<circle cx="464.0" cy="319.1" r="3.3"/>
<circle cx="466.5" cy="316.0" r="3.3"/>
<circle cx="466.5" cy="315.4" r="3.3"/>
<circle cx="466.7" cy="316.3" r="3.3"/>
<circle cx="466.7" cy="316.7" r="3.3"/>
<circle cx="466.7" cy="316.7" r="3.3"/>
<polygon points="471.0,301.5 472.0,300.4 476.0,298.4 481.0,301.4 486.0,301.4 492.0,299.4 499.0,301.4 504.0,299.4 510.0,298.4 516.0,299.4 522.0,300.4 528.0,299.4 533.0,300.4 535.6,301.4 535.6,301.6 533.0,303.6 528.0,304.6 522.0,303.6 516.0,301.6 510.0,302.2 504.0,302.6 499.0,306.2 492.0,303.6 486.0,304.6 481.0,306.2 476.0,304.6 472.0,302.6 471.0,301.5"/>
<circle cx="474.3" cy="301.5" r="3.3"/>
<circle cx="474.3" cy="300.3" r="3.3"/>
<circle cx="474.3" cy="302.7" r="3.3"/>
<circle cx="476.0" cy="298.3" r="3.3"/>
<circle cx="476.0" cy="304.7" r="3.3"/>
<circle cx="478.5" cy="303.2" r="3.3"/>
<circle cx="478.5" cy="302.1" r="3.3"/>
<circle cx="481.0" cy="301.3" r="3.3"/>
<circle cx="481.0" cy="306.3" r="3.3"/>
<circle cx="483.5" cy="303.8" r="3.3"/>
<circle cx="483.5" cy="302.1" r="3.3"/>
<circle cx="486.0" cy="301.3" r="3.3"/>
<circle cx="486.0" cy="304.7" r="3.3"/>
<circle cx="489.0" cy="300.8" r="3.3"/>
<circle cx="489.0" cy="304.2" r="3.3"/>
<circle cx="492.0" cy="299.3" r="3.3"/>
<circle cx="492.0" cy="303.7" r="3.3"/>
<circle cx="495.5" cy="302.8" r="3.3"/>
<circle cx="495.5" cy="301.6" r="3.3"/>
<circle cx="499.0" cy="301.3" r="3.3"/>
<circle cx="499.0" cy="306.3" r="3.3"/>
<circle cx="501.5" cy="301.8" r="3.3"/>
<circle cx="501.5" cy="301.1" r="3.3"/>
<circle cx="504.0" cy="299.3" r="3.3"/>
<circle cx="504.0" cy="302.7" r="3.3"/>
<circle cx="507.0" cy="300.3" r="3.3"/>
<circle cx="507.0" cy="302.0" r="3.3"/>
<circle cx="510.0" cy="298.3" r="3.3"/>
<circle cx="510.0" cy="302.3" r="3.3"/>
<circle cx="513.0" cy="298.8" r="3.3"/>
<circle cx="513.0" cy="298.6" r="3.3"/>
<circle cx="516.0" cy="299.3" r="3.3"/>
<circle cx="516.0" cy="301.7" r="3.3"/>
<circle cx="519.0" cy="301.3" r="3.3"/>
<circle cx="519.0" cy="302.7" r="3.3"/>
<circle cx="522.0" cy="300.3" r="3.3"/>
<circle cx="522.0" cy="303.7" r="3.3"/>
<circle cx="525.0" cy="300.3" r="3.3"/>
<circle cx="525.0" cy="304.2" r="3.3"/>
<circle cx="528.0" cy="299.3" r="3.3"/>
<circle cx="528.0" cy="304.7" r="3.3"/>
<circle cx="530.5" cy="299.8" r="3.3"/>
<circle cx="530.5" cy="300.8" r="3.3"/>
<circle cx="532.3" cy="300.3" r="3.3"/>
<circle cx="532.3" cy="303.7" r="3.3"/>
<circle cx="532.3" cy="301.3" r="3.3"/>
<circle cx="532.3" cy="301.7" r="3.3"/>
<polygon points="540.0,302.0 541.0,302.0 546.0,301.4 552.0,301.4 558.0,300.4 564.0,300.4 568.0,300.4 570.4,299.4 573.0,299.4 576.0,298.4 581.0,296.4 588.0,298.4 594.0,298.4 600.0,296.4 603.0,294.4 604.0,295.4 609.0,298.4 612.4,298.4 618.0,297.0 624.0,298.4 630.0,297.0 633.0,298.4 635.6,299.4 638.4,300.4 642.0,301.4 648.0,300.4 654.0,299.4 660.0,298.4 666.0,299.4 668.4,299.4 671.0,299.4 674.0,299.4 678.0,299.4 686.0,299.4 692.0,298.4 699.0,297.4 703.0,299.4 705.0,300.0 705.0,300.0 703.0,301.0 699.0,300.6 692.0,302.6 686.0,303.6 678.0,301.6 674.0,302.6 671.0,307.6 668.4,303.6 666.0,303.6 660.0,301.0 654.0,301.6 648.0,303.6 642.0,304.6 638.4,303.6 635.6,308.6 633.0,302.6 630.0,302.2 624.0,301.0 618.0,301.0 612.4,302.2 609.0,300.6 604.0,300.6 603.0,300.6 600.0,300.6 594.0,302.6 588.0,303.6 581.0,304.2 576.0,303.6 573.0,303.6 570.4,308.6 568.0,303.6 564.0,303.6 558.0,303.6 552.0,304.6 546.0,302.6 541.0,302.0 540.0,302.0"/>
<circle cx="543.3" cy="302.0" r="3.3"/>
<circle cx="543.3" cy="302.0" r="3.3"/>
<circle cx="543.5" cy="302.3" r="3.3"/>
<circle cx="543.5" cy="299.7" r="3.3"/>
<circle cx="546.0" cy="301.3" r="3.3"/>
<circle cx="546.0" cy="302.7" r="3.3"/>
<circle cx="549.0" cy="304.7" r="3.3"/>
<circle cx="549.0" cy="303.7" r="3.3"/>
<circle cx="552.0" cy="301.3" r="3.3"/>
<circle cx="552.0" cy="304.7" r="3.3"/>
<circle cx="555.0" cy="300.8" r="3.3"/>
<circle cx="555.0" cy="301.7" r="3.3"/>
<circle cx="558.0" cy="300.3" r="3.3"/>
<circle cx="558.0" cy="303.7" r="3.3"/>
<circle cx="561.0" cy="300.3" r="3.3"/>
<circle cx="561.0" cy="303.2" r="3.3"/>
<circle cx="564.0" cy="300.3" r="3.3"/>
<circle cx="564.0" cy="303.7" r="3.3"/>
<circle cx="568.0" cy="300.3" r="3.3"/>
<circle cx="568.0" cy="303.7" r="3.3"/>
<circle cx="570.4" cy="299.3" r="3.3"/>
<circle cx="570.4" cy="308.7" r="3.3"/>
<circle cx="573.0" cy="299.3" r="3.3"/>
<circle cx="573.0" cy="303.7" r="3.3"/>
<circle cx="576.0" cy="298.3" r="3.3"/>
<circle cx="576.0" cy="303.7" r="3.3"/>
<circle cx="578.5" cy="300.7" r="3.3"/>
<circle cx="578.5" cy="302.5" r="3.3"/>
<circle cx="581.0" cy="296.3" r="3.3"/>
<circle cx="581.0" cy="304.3" r="3.3"/>
<circle cx="584.5" cy="297.8" r="3.3"/>
<circle cx="584.5" cy="304.0" r="3.3"/>
<circle cx="588.0" cy="298.3" r="3.3"/>
<circle cx="588.0" cy="303.7" r="3.3"/>
<circle cx="591.0" cy="301.7" r="3.3"/>
<circle cx="591.0" cy="299.8" r="3.3"/>
<circle cx="594.0" cy="298.3" r="3.3"/>
<circle cx="594.0" cy="302.7" r="3.3"/>
<circle cx="597.0" cy="299.8" r="3.3"/>
<circle cx="597.0" cy="301.7" r="3.3"/>
<circle cx="600.0" cy="296.3" r="3.3"/>
<circle cx="600.0" cy="300.7" r="3.3"/>
<circle cx="603.0" cy="294.3" r="3.3"/>
<circle cx="603.0" cy="300.7" r="3.3"/>
<circle cx="604.0" cy="295.3" r="3.3"/>
<circle cx="604.0" cy="300.7" r="3.3"/>
<circle cx="606.5" cy="300.2" r="3.3"/>
<circle cx="606.5" cy="300.7" r="3.3"/>
<circle cx="609.0" cy="298.3" r="3.3"/>
<circle cx="609.0" cy="300.7" r="3.3"/>
<circle cx="612.4" cy="298.3" r="3.3"/>
<circle cx="612.4" cy="302.3" r="3.3"/>
<circle cx="615.2" cy="299.1" r="3.3"/>
<circle cx="615.2" cy="301.2" r="3.3"/>
<circle cx="618.0" cy="296.9" r="3.3"/>
<circle cx="618.0" cy="301.1" r="3.3"/>
<circle cx="621.0" cy="299.1" r="3.3"/>
<circle cx="621.0" cy="297.7" r="3.3"/>
<circle cx="624.0" cy="298.3" r="3.3"/>
<circle cx="624.0" cy="301.1" r="3.3"/>
<circle cx="627.0" cy="300.1" r="3.3"/>
<circle cx="627.0" cy="301.7" r="3.3"/>
<circle cx="630.0" cy="296.9" r="3.3"/>
<circle cx="630.0" cy="302.3" r="3.3"/>
<circle cx="633.0" cy="298.3" r="3.3"/>
<circle cx="633.0" cy="302.7" r="3.3"/>
<circle cx="635.6" cy="299.3" r="3.3"/>
<circle cx="635.6" cy="308.7" r="3.3"/>
<circle cx="638.4" cy="300.3" r="3.3"/>
<circle cx="638.4" cy="303.7" r="3.3"/>
<circle cx="642.0" cy="301.3" r="3.3"/>
<circle cx="642.0" cy="304.7" r="3.3"/>
<circle cx="645.0" cy="302.3" r="3.3"/>
<circle cx="645.0" cy="303.7" r="3.3"/>
<circle cx="648.0" cy="300.3" r="3.3"/>
<circle cx="648.0" cy="303.7" r="3.3"/>
<circle cx="651.0" cy="300.3" r="3.3"/>
<circle cx="651.0" cy="302.7" r="3.3"/>
<circle cx="654.0" cy="299.3" r="3.3"/>
<circle cx="654.0" cy="301.7" r="3.3"/>
<circle cx="657.0" cy="302.2" r="3.3"/>
<circle cx="657.0" cy="301.4" r="3.3"/>
<circle cx="660.0" cy="298.3" r="3.3"/>
<circle cx="660.0" cy="301.1" r="3.3"/>
<circle cx="663.0" cy="299.3" r="3.3"/>
<circle cx="663.0" cy="301.9" r="3.3"/>
<circle cx="666.0" cy="299.3" r="3.3"/>
<circle cx="666.0" cy="303.7" r="3.3"/>
<circle cx="668.4" cy="299.3" r="3.3"/>
<circle cx="668.4" cy="303.7" r="3.3"/>
<circle cx="671.0" cy="299.3" r="3.3"/>
<circle cx="671.0" cy="307.7" r="3.3"/>
<circle cx="674.0" cy="299.3" r="3.3"/>
<circle cx="674.0" cy="302.7" r="3.3"/>
<circle cx="678.0" cy="299.3" r="3.3"/>
<circle cx="678.0" cy="301.7" r="3.3"/>
<circle cx="680.7" cy="300.8" r="3.3"/>
<circle cx="680.7" cy="301.9" r="3.3"/>
<circle cx="683.3" cy="299.3" r="3.3"/>
<circle cx="683.3" cy="300.5" r="3.3"/>
<circle cx="686.0" cy="299.3" r="3.3"/>
<circle cx="686.0" cy="303.7" r="3.3"/>
<circle cx="689.0" cy="302.2" r="3.3"/>
<circle cx="689.0" cy="300.7" r="3.3"/>
<circle cx="692.0" cy="298.3" r="3.3"/>
<circle cx="692.0" cy="302.7" r="3.3"/>
<circle cx="695.5" cy="297.8" r="3.3"/>
<circle cx="695.5" cy="300.2" r="3.3"/>
<circle cx="699.0" cy="297.3" r="3.3"/>
<circle cx="699.0" cy="300.7" r="3.3"/>
<circle cx="701.7" cy="299.3" r="3.3"/>
<circle cx="701.7" cy="301.1" r="3.3"/>
<circle cx="701.7" cy="300.0" r="3.3"/>
<polygon points="140.0,569.0 143.0,569.4 145.0,566.4 147.0,564.4 150.0,562.4 156.0,562.4 162.0,562.8 168.0,564.0 171.0,563.4 176.0,562.8 184.0,560.8 190.0,561.4 196.0,560.8 202.0,561.4 207.0,558.4 212.0,556.4 218.0,559.4 224.0,562.0 228.0,559.4 232.0,562.4 238.0,562.0 245.0,559.4 247.0,558.4 252.0,559.4 258.0,560.0 264.0,560.4 270.0,560.8 277.4,560.8 283.0,562.4 288.0,562.8 290.0,563.4 293.0,563.4 296.0,560.4 300.0,558.4 305.0,557.4 310.0,555.4 315.0,558.4 320.0,557.4 326.0,561.4 330.0,565.4 336.0,559.4 342.0,558.4 348.0,556.4 352.0,554.4 358.0,555.4 364.0,552.4 370.0,550.0 376.0,555.4 382.0,556.4 384.0,556.0 386.4,555.4 389.0,556.4 389.0,561.6 386.4,568.6 384.0,576.6 382.0,577.2 376.0,578.6 370.0,574.6 364.0,574.0 358.0,573.6 352.0,576.6 348.0,579.6 342.0,581.2 336.0,579.6 330.0,578.6 326.0,574.6 320.0,574.6 315.0,578.6 310.0,575.6 305.0,574.6 300.0,576.6 296.0,576.6 293.0,588.6 290.0,588.6 288.0,578.6 283.0,580.6 277.4,574.6 270.0,576.6 264.0,577.6 258.0,577.6 252.0,575.6 247.0,574.6 245.0,576.6 238.0,576.6 232.0,577.6 228.0,576.6 224.0,574.6 218.0,572.6 212.0,571.6 207.0,572.6 202.0,574.0 196.0,574.0 190.0,573.6 184.0,572.6 176.0,571.6 171.0,570.6 168.0,570.6 162.0,569.6 156.0,570.6 150.0,574.6 147.0,580.6 145.0,579.6 143.0,569.6 140.0,569.0"/>
<circle cx="143.3" cy="569.0" r="3.3"/>
<circle cx="143.3" cy="569.3" r="3.3"/>
<circle cx="143.3" cy="569.7" r="3.3"/>
<circle cx="145.0" cy="566.3" r="3.3"/>
<circle cx="145.0" cy="579.7" r="3.3"/>
<circle cx="147.0" cy="564.3" r="3.3"/>
<circle cx="147.0" cy="580.7" r="3.3"/>
<circle cx="150.0" cy="562.3" r="3.3"/>
<circle cx="150.0" cy="574.7" r="3.3"/>
<circle cx="153.0" cy="562.8" r="3.3"/>
<circle cx="153.0" cy="571.2" r="3.3"/>
<circle cx="156.0" cy="562.3" r="3.3"/>
<circle cx="156.0" cy="570.7" r="3.3"/>
<circle cx="159.0" cy="565.9" r="3.3"/>
<circle cx="159.0" cy="566.8" r="3.3"/>
<circle cx="162.0" cy="562.7" r="3.3"/>
<circle cx="162.0" cy="569.7" r="3.3"/>
<circle cx="165.0" cy="566.7" r="3.3"/>
<circle cx="165.0" cy="567.7" r="3.3"/>
<circle cx="168.0" cy="563.9" r="3.3"/>
<circle cx="168.0" cy="570.7" r="3.3"/>
<circle cx="171.0" cy="563.3" r="3.3"/>
<circle cx="171.0" cy="570.7" r="3.3"/>
<circle cx="173.5" cy="563.0" r="3.3"/>
<circle cx="173.5" cy="568.7" r="3.3"/>
<circle cx="176.0" cy="562.7" r="3.3"/>
<circle cx="176.0" cy="571.7" r="3.3"/>
<circle cx="178.7" cy="563.5" r="3.3"/>
<circle cx="178.7" cy="572.0" r="3.3"/>
<circle cx="181.3" cy="561.4" r="3.3"/>
<circle cx="181.3" cy="571.9" r="3.3"/>
<circle cx="184.0" cy="560.7" r="3.3"/>
<circle cx="184.0" cy="572.7" r="3.3"/>
<circle cx="187.0" cy="561.0" r="3.3"/>
<circle cx="187.0" cy="573.2" r="3.3"/>
<circle cx="190.0" cy="561.3" r="3.3"/>
<circle cx="190.0" cy="573.7" r="3.3"/>
<circle cx="193.0" cy="561.0" r="3.3"/>
<circle cx="193.0" cy="573.9" r="3.3"/>
<circle cx="196.0" cy="560.7" r="3.3"/>
<circle cx="196.0" cy="574.1" r="3.3"/>
<circle cx="199.0" cy="563.5" r="3.3"/>
<circle cx="199.0" cy="574.1" r="3.3"/>
<circle cx="202.0" cy="561.3" r="3.3"/>
<circle cx="202.0" cy="574.1" r="3.3"/>
<circle cx="204.5" cy="559.8" r="3.3"/>
<circle cx="204.5" cy="570.0" r="3.3"/>
<circle cx="207.0" cy="558.3" r="3.3"/>
<circle cx="207.0" cy="572.7" r="3.3"/>
<circle cx="209.5" cy="560.7" r="3.3"/>
<circle cx="209.5" cy="569.7" r="3.3"/>
<circle cx="212.0" cy="556.3" r="3.3"/>
<circle cx="212.0" cy="571.7" r="3.3"/>
<circle cx="215.0" cy="559.3" r="3.3"/>
<circle cx="215.0" cy="571.7" r="3.3"/>
<circle cx="218.0" cy="559.3" r="3.3"/>
<circle cx="218.0" cy="572.7" r="3.3"/>
<circle cx="221.0" cy="562.1" r="3.3"/>
<circle cx="221.0" cy="573.7" r="3.3"/>
<circle cx="224.0" cy="561.9" r="3.3"/>
<circle cx="224.0" cy="574.7" r="3.3"/>
<circle cx="228.0" cy="559.3" r="3.3"/>
<circle cx="228.0" cy="576.7" r="3.3"/>
<circle cx="232.0" cy="562.3" r="3.3"/>
<circle cx="232.0" cy="577.7" r="3.3"/>
<circle cx="235.0" cy="563.6" r="3.3"/>
<circle cx="235.0" cy="574.7" r="3.3"/>
<circle cx="238.0" cy="561.9" r="3.3"/>
<circle cx="238.0" cy="576.7" r="3.3"/>
<circle cx="241.5" cy="563.1" r="3.3"/>
<circle cx="241.5" cy="573.3" r="3.3"/>
<circle cx="245.0" cy="559.3" r="3.3"/>
<circle cx="245.0" cy="576.7" r="3.3"/>
<circle cx="247.0" cy="558.3" r="3.3"/>
<circle cx="247.0" cy="574.7" r="3.3"/>
<circle cx="249.5" cy="560.3" r="3.3"/>
<circle cx="249.5" cy="573.7" r="3.3"/>
<circle cx="252.0" cy="559.3" r="3.3"/>
<circle cx="252.0" cy="575.7" r="3.3"/>
<circle cx="255.0" cy="561.1" r="3.3"/>
<circle cx="255.0" cy="576.2" r="3.3"/>
<circle cx="258.0" cy="559.9" r="3.3"/>
<circle cx="258.0" cy="577.7" r="3.3"/>
<circle cx="261.0" cy="561.6" r="3.3"/>
<circle cx="261.0" cy="575.2" r="3.3"/>
<circle cx="264.0" cy="560.3" r="3.3"/>
<circle cx="264.0" cy="577.7" r="3.3"/>
<circle cx="267.0" cy="560.5" r="3.3"/>
<circle cx="267.0" cy="576.7" r="3.3"/>
<circle cx="270.0" cy="560.7" r="3.3"/>
<circle cx="270.0" cy="576.7" r="3.3"/>
<circle cx="273.7" cy="564.1" r="3.3"/>
<circle cx="273.7" cy="575.7" r="3.3"/>
<circle cx="277.4" cy="560.7" r="3.3"/>
<circle cx="277.4" cy="574.7" r="3.3"/>
<circle cx="280.2" cy="564.0" r="3.3"/>
<circle cx="280.2" cy="577.7" r="3.3"/>
<circle cx="283.0" cy="562.3" r="3.3"/>
<circle cx="283.0" cy="580.7" r="3.3"/>
<circle cx="285.5" cy="565.9" r="3.3"/>
<circle cx="285.5" cy="579.2" r="3.3"/>
<circle cx="288.0" cy="562.7" r="3.3"/>
<circle cx="288.0" cy="578.7" r="3.3"/>
<circle cx="290.0" cy="563.3" r="3.3"/>
<circle cx="290.0" cy="588.7" r="3.3"/>
<circle cx="293.0" cy="563.3" r="3.3"/>
<circle cx="293.0" cy="588.7" r="3.3"/>
<circle cx="296.0" cy="560.3" r="3.3"/>
<circle cx="296.0" cy="576.7" r="3.3"/>
<circle cx="300.0" cy="558.3" r="3.3"/>
<circle cx="300.0" cy="576.7" r="3.3"/>
<circle cx="302.5" cy="557.8" r="3.3"/>
<circle cx="302.5" cy="574.2" r="3.3"/>
<circle cx="305.0" cy="557.3" r="3.3"/>
<circle cx="305.0" cy="574.7" r="3.3"/>
<circle cx="307.5" cy="558.8" r="3.3"/>
<circle cx="307.5" cy="571.8" r="3.3"/>
<circle cx="310.0" cy="555.3" r="3.3"/>
<circle cx="310.0" cy="575.7" r="3.3"/>
<circle cx="312.5" cy="560.2" r="3.3"/>
<circle cx="312.5" cy="574.7" r="3.3"/>
<circle cx="315.0" cy="558.3" r="3.3"/>
<circle cx="315.0" cy="578.7" r="3.3"/>
<circle cx="317.5" cy="557.8" r="3.3"/>
<circle cx="317.5" cy="573.3" r="3.3"/>
<circle cx="320.0" cy="557.3" r="3.3"/>
<circle cx="320.0" cy="574.7" r="3.3"/>
<circle cx="323.0" cy="561.8" r="3.3"/>
<circle cx="323.0" cy="574.7" r="3.3"/>
<circle cx="326.0" cy="561.3" r="3.3"/>
<circle cx="326.0" cy="574.7" r="3.3"/>
<circle cx="330.0" cy="565.3" r="3.3"/>
<circle cx="330.0" cy="578.7" r="3.3"/>
<circle cx="333.0" cy="563.8" r="3.3"/>
<circle cx="333.0" cy="576.7" r="3.3"/>
<circle cx="336.0" cy="559.3" r="3.3"/>
<circle cx="336.0" cy="579.7" r="3.3"/>
<circle cx="339.0" cy="560.3" r="3.3"/>
<circle cx="339.0" cy="578.0" r="3.3"/>
<circle cx="342.0" cy="558.3" r="3.3"/>
<circle cx="342.0" cy="581.3" r="3.3"/>
<circle cx="345.0" cy="559.8" r="3.3"/>
<circle cx="345.0" cy="578.0" r="3.3"/>
<circle cx="348.0" cy="556.3" r="3.3"/>
<circle cx="348.0" cy="579.7" r="3.3"/>
<circle cx="352.0" cy="554.3" r="3.3"/>
<circle cx="352.0" cy="576.7" r="3.3"/>
<circle cx="355.0" cy="554.8" r="3.3"/>
<circle cx="355.0" cy="574.7" r="3.3"/>
<circle cx="358.0" cy="555.3" r="3.3"/>
<circle cx="358.0" cy="573.7" r="3.3"/>
<circle cx="361.0" cy="554.3" r="3.3"/>
<circle cx="361.0" cy="570.5" r="3.3"/>
<circle cx="364.0" cy="552.3" r="3.3"/>
<circle cx="364.0" cy="574.1" r="3.3"/>
<circle cx="367.0" cy="552.6" r="3.3"/>
<circle cx="367.0" cy="571.0" r="3.3"/>
<circle cx="370.0" cy="549.9" r="3.3"/>
<circle cx="370.0" cy="574.7" r="3.3"/>
<circle cx="373.0" cy="552.6" r="3.3"/>
<circle cx="373.0" cy="574.2" r="3.3"/>
<circle cx="376.0" cy="555.3" r="3.3"/>
<circle cx="376.0" cy="578.7" r="3.3"/>
<circle cx="379.0" cy="556.3" r="3.3"/>
<circle cx="379.0" cy="575.5" r="3.3"/>
<circle cx="382.0" cy="556.3" r="3.3"/>
<circle cx="382.0" cy="577.3" r="3.3"/>
<circle cx="384.0" cy="555.9" r="3.3"/>
<circle cx="384.0" cy="576.7" r="3.3"/>
<circle cx="385.7" cy="555.3" r="3.3"/>
<circle cx="385.7" cy="568.7" r="3.3"/>
<circle cx="385.7" cy="556.3" r="3.3"/>
<circle cx="385.7" cy="561.7" r="3.3"/>
<polygon points="390.4,566.0 391.0,565.4 396.0,564.4 400.0,563.4 403.0,557.4 406.0,562.4 408.0,563.4 411.0,563.4 413.6,563.4 416.4,562.4 419.0,561.4 424.0,559.4 430.0,565.4 432.0,564.8 434.0,564.4 436.6,564.8 440.0,565.4 446.0,566.4 452.0,566.4 458.0,563.4 464.0,563.4 469.0,564.4 469.6,566.4 469.6,568.6 469.0,570.6 464.0,574.6 458.0,572.6 452.0,574.6 446.0,575.2 440.0,573.6 436.6,573.6 434.0,577.2 432.0,573.2 430.0,572.6 424.0,570.6 419.0,574.6 416.4,573.6 413.6,578.6 411.0,572.6 408.0,571.6 406.0,571.6 403.0,572.6 400.0,572.6 396.0,570.6 391.0,566.6 390.4,566.0"/>
<circle cx="393.7" cy="566.0" r="3.3"/>
<circle cx="393.7" cy="565.3" r="3.3"/>
<circle cx="393.7" cy="566.7" r="3.3"/>
<circle cx="393.7" cy="565.3" r="3.3"/>
<circle cx="393.7" cy="568.7" r="3.3"/>
<circle cx="396.0" cy="564.3" r="3.3"/>
<circle cx="396.0" cy="570.7" r="3.3"/>
<circle cx="400.0" cy="563.3" r="3.3"/>
<circle cx="400.0" cy="572.7" r="3.3"/>
<circle cx="403.0" cy="557.3" r="3.3"/>
<circle cx="403.0" cy="572.7" r="3.3"/>
<circle cx="406.0" cy="562.3" r="3.3"/>
<circle cx="406.0" cy="571.7" r="3.3"/>
<circle cx="408.0" cy="563.3" r="3.3"/>
<circle cx="408.0" cy="571.7" r="3.3"/>
<circle cx="411.0" cy="563.3" r="3.3"/>
<circle cx="411.0" cy="572.7" r="3.3"/>
<circle cx="413.6" cy="563.3" r="3.3"/>
<circle cx="413.6" cy="578.7" r="3.3"/>
<circle cx="416.4" cy="562.3" r="3.3"/>
<circle cx="416.4" cy="573.7" r="3.3"/>
<circle cx="419.0" cy="561.3" r="3.3"/>
<circle cx="419.0" cy="574.7" r="3.3"/>
<circle cx="421.5" cy="561.8" r="3.3"/>
<circle cx="421.5" cy="571.2" r="3.3"/>
<circle cx="424.0" cy="559.3" r="3.3"/>
<circle cx="424.0" cy="570.7" r="3.3"/>
<circle cx="427.0" cy="565.7" r="3.3"/>
<circle cx="427.0" cy="570.2" r="3.3"/>
<circle cx="430.0" cy="565.3" r="3.3"/>
<circle cx="430.0" cy="572.7" r="3.3"/>
<circle cx="432.0" cy="564.7" r="3.3"/>
<circle cx="432.0" cy="573.3" r="3.3"/>
<circle cx="434.0" cy="564.3" r="3.3"/>
<circle cx="434.0" cy="577.3" r="3.3"/>
<circle cx="436.6" cy="564.7" r="3.3"/>
<circle cx="436.6" cy="573.7" r="3.3"/>
<circle cx="440.0" cy="565.3" r="3.3"/>
<circle cx="440.0" cy="573.7" r="3.3"/>
<circle cx="443.0" cy="565.8" r="3.3"/>
<circle cx="443.0" cy="572.0" r="3.3"/>
<circle cx="446.0" cy="566.3" r="3.3"/>
<circle cx="446.0" cy="575.3" r="3.3"/>
<circle cx="449.0" cy="566.3" r="3.3"/>
<circle cx="449.0" cy="571.6" r="3.3"/>
<circle cx="452.0" cy="566.3" r="3.3"/>
<circle cx="452.0" cy="574.7" r="3.3"/>
<circle cx="455.0" cy="567.3" r="3.3"/>
<circle cx="455.0" cy="573.7" r="3.3"/>
<circle cx="458.0" cy="563.3" r="3.3"/>
<circle cx="458.0" cy="572.7" r="3.3"/>
<circle cx="461.0" cy="564.8" r="3.3"/>
<circle cx="461.0" cy="570.3" r="3.3"/>
<circle cx="464.0" cy="563.3" r="3.3"/>
<circle cx="464.0" cy="574.7" r="3.3"/>
<circle cx="466.3" cy="567.2" r="3.3"/>
<circle cx="466.3" cy="572.7" r="3.3"/>
<circle cx="466.3" cy="564.3" r="3.3"/>
<circle cx="466.3" cy="570.7" r="3.3"/>
<circle cx="466.3" cy="566.3" r="3.3"/>
<circle cx="466.3" cy="568.7" r="3.3"/>
<polygon points="471.0,568.0 473.0,566.4 478.0,568.4 484.0,568.4 487.0,568.0 489.4,567.4 492.4,568.0 496.0,568.0 502.0,566.8 506.0,566.4 511.0,567.4 514.0,566.4 517.0,563.4 522.0,568.4 526.0,566.4 531.6,562.4 535.0,564.4 536.0,566.4 536.0,566.6 535.0,568.6 531.6,569.6 526.0,572.6 522.0,573.6 517.0,570.6 514.0,572.6 511.0,578.0 506.0,575.2 502.0,572.6 496.0,572.6 492.4,573.6 489.4,580.6 487.0,573.6 484.0,572.6 478.0,573.2 473.0,570.6 471.0,568.0"/>
<circle cx="474.3" cy="568.0" r="3.3"/>
<circle cx="474.3" cy="566.3" r="3.3"/>
<circle cx="474.3" cy="570.7" r="3.3"/>
<circle cx="475.5" cy="570.7" r="3.3"/>
<circle cx="475.5" cy="572.0" r="3.3"/>
<circle cx="478.0" cy="568.3" r="3.3"/>
<circle cx="478.0" cy="573.3" r="3.3"/>
<circle cx="481.0" cy="570.8" r="3.3"/>
<circle cx="481.0" cy="572.5" r="3.3"/>
<circle cx="484.0" cy="568.3" r="3.3"/>
<circle cx="484.0" cy="572.7" r="3.3"/>
<circle cx="487.0" cy="567.9" r="3.3"/>
<circle cx="487.0" cy="573.7" r="3.3"/>
<circle cx="489.4" cy="567.3" r="3.3"/>
<circle cx="489.4" cy="580.7" r="3.3"/>
<circle cx="492.4" cy="567.9" r="3.3"/>
<circle cx="492.4" cy="573.7" r="3.3"/>
<circle cx="496.0" cy="567.9" r="3.3"/>
<circle cx="496.0" cy="572.7" r="3.3"/>
<circle cx="499.0" cy="567.8" r="3.3"/>
<circle cx="499.0" cy="570.2" r="3.3"/>
<circle cx="502.0" cy="566.7" r="3.3"/>
<circle cx="502.0" cy="572.7" r="3.3"/>
<circle cx="506.0" cy="566.3" r="3.3"/>
<circle cx="506.0" cy="575.3" r="3.3"/>
<circle cx="508.5" cy="566.8" r="3.3"/>
<circle cx="508.5" cy="573.3" r="3.3"/>
<circle cx="511.0" cy="567.3" r="3.3"/>
<circle cx="511.0" cy="578.1" r="3.3"/>
<circle cx="514.0" cy="566.3" r="3.3"/>
<circle cx="514.0" cy="572.7" r="3.3"/>
<circle cx="517.0" cy="563.3" r="3.3"/>
<circle cx="517.0" cy="570.7" r="3.3"/>
<circle cx="519.5" cy="565.8" r="3.3"/>
<circle cx="519.5" cy="568.8" r="3.3"/>
<circle cx="522.0" cy="568.3" r="3.3"/>
<circle cx="522.0" cy="573.7" r="3.3"/>
<circle cx="526.0" cy="566.3" r="3.3"/>
<circle cx="526.0" cy="572.7" r="3.3"/>
<circle cx="528.8" cy="564.3" r="3.3"/>
<circle cx="528.8" cy="568.7" r="3.3"/>
<circle cx="531.6" cy="562.3" r="3.3"/>
<circle cx="531.6" cy="569.7" r="3.3"/>
<circle cx="532.7" cy="564.3" r="3.3"/>
<circle cx="532.7" cy="568.7" r="3.3"/>
<circle cx="532.7" cy="566.3" r="3.3"/>
<circle cx="532.7" cy="566.7" r="3.3"/>
<polygon points="540.0,569.5 541.0,569.4 546.0,568.4 551.0,566.0 556.0,564.4 562.0,566.4 569.4,566.4 574.0,567.4 575.6,567.4 578.0,567.4 580.6,566.8 584.0,566.0 590.0,566.0 596.0,566.0 602.0,566.4 608.0,566.4 612.4,566.0 619.0,564.4 625.0,566.0 631.0,563.4 636.0,565.4 640.0,566.4 641.0,565.4 647.0,566.4 656.0,565.4 659.0,565.4 664.0,562.4 670.0,566.4 676.0,566.4 680.0,565.4 683.0,563.4 688.0,565.4 691.0,563.4 693.0,561.4 696.0,564.4 698.0,568.4 702.0,568.4 705.0,568.7 705.0,568.7 702.0,569.0 698.0,570.6 696.0,570.6 693.0,570.6 691.0,571.0 688.0,571.0 683.0,569.6 680.0,569.6 676.0,571.0 670.0,569.6 664.0,570.6 659.0,574.6 656.0,570.6 647.0,570.6 641.0,575.6 640.0,574.6 636.0,574.6 631.0,570.6 625.0,570.6 619.0,571.6 612.4,575.2 608.0,571.6 602.0,577.2 596.0,572.6 590.0,571.6 584.0,572.6 580.6,573.6 578.0,582.0 575.6,573.6 574.0,573.6 569.4,569.6 562.0,569.6 556.0,572.6 551.0,572.6 546.0,570.6 541.0,569.6 540.0,569.5"/>
<circle cx="543.3" cy="569.5" r="3.3"/>
<circle cx="543.3" cy="569.3" r="3.3"/>
<circle cx="543.3" cy="569.7" r="3.3"/>
<circle cx="543.5" cy="569.3" r="3.3"/>
<circle cx="543.5" cy="570.2" r="3.3"/>
<circle cx="546.0" cy="568.3" r="3.3"/>
<circle cx="546.0" cy="570.7" r="3.3"/>
<circle cx="548.5" cy="568.6" r="3.3"/>
<circle cx="548.5" cy="571.7" r="3.3"/>
<circle cx="551.0" cy="565.9" r="3.3"/>
<circle cx="551.0" cy="572.7" r="3.3"/>
<circle cx="553.5" cy="565.1" r="3.3"/>
<circle cx="553.5" cy="572.7" r="3.3"/>
<circle cx="556.0" cy="564.3" r="3.3"/>
<circle cx="556.0" cy="572.7" r="3.3"/>
<circle cx="559.0" cy="567.8" r="3.3"/>
<circle cx="559.0" cy="569.7" r="3.3"/>
<circle cx="562.0" cy="566.3" r="3.3"/>
<circle cx="562.0" cy="569.7" r="3.3"/>
<circle cx="565.7" cy="569.7" r="3.3"/>
<circle cx="565.7" cy="568.2" r="3.3"/>
<circle cx="569.4" cy="566.3" r="3.3"/>
<circle cx="569.4" cy="569.7" r="3.3"/>
<circle cx="574.0" cy="567.3" r="3.3"/>
<circle cx="574.0" cy="573.7" r="3.3"/>
<circle cx="575.6" cy="567.3" r="3.3"/>
<circle cx="575.6" cy="573.7" r="3.3"/>
<circle cx="578.0" cy="567.3" r="3.3"/>
<circle cx="578.0" cy="582.1" r="3.3"/>
<circle cx="580.6" cy="566.7" r="3.3"/>
<circle cx="580.6" cy="573.7" r="3.3"/>
<circle cx="584.0" cy="565.9" r="3.3"/>
<circle cx="584.0" cy="572.7" r="3.3"/>
<circle cx="587.0" cy="565.9" r="3.3"/>
<circle cx="587.0" cy="572.2" r="3.3"/>
<circle cx="590.0" cy="565.9" r="3.3"/>
<circle cx="590.0" cy="571.7" r="3.3"/>
<circle cx="593.0" cy="569.3" r="3.3"/>
<circle cx="593.0" cy="568.8" r="3.3"/>
<circle cx="596.0" cy="565.9" r="3.3"/>
<circle cx="596.0" cy="572.7" r="3.3"/>
<circle cx="599.0" cy="569.5" r="3.3"/>
<circle cx="599.0" cy="574.5" r="3.3"/>
<circle cx="602.0" cy="566.3" r="3.3"/>
<circle cx="602.0" cy="577.3" r="3.3"/>
<circle cx="605.0" cy="566.3" r="3.3"/>
<circle cx="605.0" cy="571.1" r="3.3"/>
<circle cx="608.0" cy="566.3" r="3.3"/>
<circle cx="608.0" cy="571.7" r="3.3"/>
<circle cx="612.4" cy="565.9" r="3.3"/>
<circle cx="612.4" cy="575.3" r="3.3"/>
<circle cx="615.7" cy="565.1" r="3.3"/>
<circle cx="615.7" cy="570.1" r="3.3"/>
<circle cx="619.0" cy="564.3" r="3.3"/>
<circle cx="619.0" cy="571.7" r="3.3"/>
<circle cx="622.0" cy="565.1" r="3.3"/>
<circle cx="622.0" cy="567.8" r="3.3"/>
<circle cx="625.0" cy="565.9" r="3.3"/>
<circle cx="625.0" cy="570.7" r="3.3"/>
<circle cx="628.0" cy="566.1" r="3.3"/>
<circle cx="628.0" cy="567.3" r="3.3"/>
<circle cx="631.0" cy="563.3" r="3.3"/>
<circle cx="631.0" cy="570.7" r="3.3"/>
<circle cx="633.5" cy="564.8" r="3.3"/>
<circle cx="633.5" cy="572.7" r="3.3"/>
<circle cx="636.0" cy="565.3" r="3.3"/>
<circle cx="636.0" cy="574.7" r="3.3"/>
<circle cx="640.0" cy="566.3" r="3.3"/>
<circle cx="640.0" cy="574.7" r="3.3"/>
<circle cx="641.0" cy="565.3" r="3.3"/>
<circle cx="641.0" cy="575.7" r="3.3"/>
<circle cx="644.0" cy="566.3" r="3.3"/>
<circle cx="644.0" cy="572.7" r="3.3"/>
<circle cx="647.0" cy="566.3" r="3.3"/>
<circle cx="647.0" cy="570.7" r="3.3"/>
<circle cx="650.0" cy="566.5" r="3.3"/>
<circle cx="650.0" cy="568.2" r="3.3"/>
<circle cx="653.0" cy="569.0" r="3.3"/>
<circle cx="653.0" cy="568.2" r="3.3"/>
<circle cx="656.0" cy="565.3" r="3.3"/>
<circle cx="656.0" cy="570.7" r="3.3"/>
<circle cx="659.0" cy="565.3" r="3.3"/>
<circle cx="659.0" cy="574.7" r="3.3"/>
<circle cx="661.5" cy="565.3" r="3.3"/>
<circle cx="661.5" cy="571.2" r="3.3"/>
<circle cx="664.0" cy="562.3" r="3.3"/>
<circle cx="664.0" cy="570.7" r="3.3"/>
<circle cx="667.0" cy="567.7" r="3.3"/>
<circle cx="667.0" cy="567.7" r="3.3"/>
<circle cx="670.0" cy="566.3" r="3.3"/>
<circle cx="670.0" cy="569.7" r="3.3"/>
<circle cx="673.0" cy="567.8" r="3.3"/>
<circle cx="673.0" cy="567.0" r="3.3"/>
<circle cx="676.0" cy="566.3" r="3.3"/>
<circle cx="676.0" cy="571.1" r="3.3"/>
<circle cx="680.0" cy="565.3" r="3.3"/>
<circle cx="680.0" cy="569.7" r="3.3"/>
<circle cx="683.0" cy="563.3" r="3.3"/>
<circle cx="683.0" cy="569.7" r="3.3"/>
<circle cx="685.5" cy="566.8" r="3.3"/>
<circle cx="685.5" cy="570.4" r="3.3"/>
<circle cx="688.0" cy="565.3" r="3.3"/>
<circle cx="688.0" cy="571.1" r="3.3"/>
<circle cx="691.0" cy="563.3" r="3.3"/>
<circle cx="691.0" cy="571.1" r="3.3"/>
<circle cx="693.0" cy="561.3" r="3.3"/>
<circle cx="693.0" cy="570.7" r="3.3"/>
<circle cx="696.0" cy="564.3" r="3.3"/>
<circle cx="696.0" cy="570.7" r="3.3"/>
<circle cx="698.0" cy="568.3" r="3.3"/>
<circle cx="698.0" cy="570.7" r="3.3"/>
<circle cx="701.7" cy="568.3" r="3.3"/>
<circle cx="701.7" cy="569.1" r="3.3"/>
<circle cx="701.7" cy="568.7" r="3.3"/>
<ellipse cx="714.5" cy="200.5" rx="6.0" ry="4.6"/>
<ellipse cx="714.5" cy="301.3" rx="6.0" ry="4.6"/>
<ellipse cx="714.5" cy="568.5" rx="6.0" ry="4.6"/>
<ellipse cx="277.6" cy="185.0" rx="3.1" ry="3.4"/>
<ellipse cx="387.0" cy="180.4" rx="3.1" ry="3.4"/>
<ellipse cx="403.0" cy="184.8" rx="3.1" ry="3.4"/>
<ellipse cx="569.4" cy="190.0" rx="3.1" ry="3.4"/>
<ellipse cx="656.2" cy="187.4" rx="3.1" ry="3.4"/>
<ellipse cx="680.4" cy="211.4" rx="3.1" ry="3.4"/>
<ellipse cx="690.6" cy="216.8" rx="3.1" ry="3.4"/>
<ellipse cx="712.0" cy="210.0" rx="3.1" ry="3.4"/>
<ellipse cx="685.9" cy="152.5" rx="3.1" ry="3.4"/>
<ellipse cx="403.0" cy="306.8" rx="3.1" ry="3.4"/>
<ellipse cx="510.4" cy="282.4" rx="3.1" ry="3.4"/>
<ellipse cx="612.4" cy="284.0" rx="3.1" ry="3.4"/>
<ellipse cx="686.0" cy="286.0" rx="3.1" ry="3.4"/>
<ellipse cx="170.6" cy="578.6" rx="3.1" ry="3.4"/>
<ellipse cx="235.4" cy="583.0" rx="3.1" ry="3.4"/>
<ellipse cx="245.0" cy="584.6" rx="3.1" ry="3.4"/>
<ellipse cx="277.4" cy="551.6" rx="3.1" ry="3.4"/>
<ellipse cx="387.0" cy="548.0" rx="3.1" ry="3.4"/>
<ellipse cx="521.6" cy="581.6" rx="3.1" ry="3.4"/>
<ellipse cx="569.4" cy="556.6" rx="3.1" ry="3.4"/>
<ellipse cx="612.4" cy="584.0" rx="3.1" ry="3.4"/>
<ellipse cx="656.2" cy="554.0" rx="3.1" ry="3.4"/>
<ellipse cx="680.4" cy="581.0" rx="3.1" ry="3.4"/>
<ellipse cx="686.0" cy="537.4" rx="3.1" ry="3.4"/>
<ellipse cx="690.6" cy="588.4" rx="3.1" ry="3.4"/>
<ellipse cx="695.0" cy="577.6" rx="3.1" ry="3.4"/>
<ellipse cx="712.0" cy="578.4" rx="3.1" ry="3.4"/>
<ellipse cx="711.3" cy="198.7" rx="3.1" ry="3.4"/>
<ellipse cx="711.3" cy="202.4" rx="3.1" ry="3.4"/>
<ellipse cx="714.5" cy="200.5" rx="3.1" ry="3.4"/>
<ellipse cx="717.6" cy="199.5" rx="3.1" ry="3.4"/>
<ellipse cx="717.8" cy="202.5" rx="3.1" ry="3.4"/>
<ellipse cx="711.3" cy="299.5" rx="3.1" ry="3.4"/>
<ellipse cx="711.3" cy="303.2" rx="3.1" ry="3.4"/>
<ellipse cx="714.5" cy="301.3" rx="3.1" ry="3.4"/>
<ellipse cx="717.6" cy="300.3" rx="3.1" ry="3.4"/>
<ellipse cx="717.8" cy="303.3" rx="3.1" ry="3.4"/>
<ellipse cx="711.3" cy="566.7" rx="3.1" ry="3.4"/>
<ellipse cx="711.3" cy="570.4" rx="3.1" ry="3.4"/>
<ellipse cx="714.5" cy="568.5" rx="3.1" ry="3.4"/>
<ellipse cx="717.6" cy="567.5" rx="3.1" ry="3.4"/>
<ellipse cx="717.8" cy="570.5" rx="3.1" ry="3.4"/>
</g>
<g fill="#fff" shape-rendering="crispEdges">
<rect x="74" y="74" width="702" height="2"/>
<rect x="74" y="604" width="702" height="2"/>
<rect x="74" y="74" width="2" height="532"/>
<rect x="774" y="74" width="2" height="532"/>
<rect x="74" y="251" width="702" height="2"/>
<rect x="74" y="427" width="702" height="2"/>
<rect x="95" y="76" width="2" height="4"/>
<rect x="95" y="246" width="2" height="11"/>
<rect x="95" y="423" width="2" height="11"/>
<rect x="95" y="600" width="2" height="4"/>
<rect x="115" y="76" width="2" height="4"/>
<rect x="115" y="246" width="2" height="11"/>
<rect x="115" y="423" width="2" height="11"/>
<rect x="115" y="600" width="2" height="4"/>
<rect x="136" y="76" width="2" height="4"/>
<rect x="136" y="246" width="2" height="11"/>
<rect x="136" y="423" width="2" height="11"/>
<rect x="136" y="600" width="2" height="4"/>
<rect x="157" y="76" width="2" height="4"/>
<rect x="157" y="246" width="2" height="11"/>
<rect x="157" y="423" width="2" height="11"/>
<rect x="157" y="600" width="2" height="4"/>
<rect x="178" y="76" width="2" height="9"/>
<rect x="178" y="242" width="2" height="20"/>
<rect x="178" y="418" width="2" height="20"/>
<rect x="178" y="595" width="2" height="9"/>
<rect x="198" y="76" width="2" height="4"/>
<rect x="198" y="246" width="2" height="11"/>
<rect x="198" y="423" width="2" height="11"/>
<rect x="198" y="600" width="2" height="4"/>
<rect x="219" y="76" width="2" height="4"/>
<rect x="219" y="246" width="2" height="11"/>
<rect x="219" y="423" width="2" height="11"/>
<rect x="219" y="600" width="2" height="4"/>
<rect x="240" y="76" width="2" height="4"/>
<rect x="240" y="246" width="2" height="11"/>
<rect x="240" y="423" width="2" height="11"/>
<rect x="240" y="600" width="2" height="4"/>
<rect x="261" y="76" width="2" height="4"/>
<rect x="261" y="246" width="2" height="11"/>
<rect x="261" y="423" width="2" height="11"/>
<rect x="261" y="600" width="2" height="4"/>
<rect x="282" y="76" width="2" height="9"/>
<rect x="282" y="242" width="2" height="20"/>
<rect x="282" y="418" width="2" height="20"/>
<rect x="282" y="595" width="2" height="9"/>
<rect x="302" y="76" width="2" height="4"/>
<rect x="302" y="246" width="2" height="11"/>
<rect x="302" y="423" width="2" height="11"/>
<rect x="302" y="600" width="2" height="4"/>
<rect x="323" y="76" width="2" height="4"/>
<rect x="323" y="246" width="2" height="11"/>
<rect x="323" y="423" width="2" height="11"/>
<rect x="323" y="600" width="2" height="4"/>
<rect x="344" y="76" width="2" height="4"/>
<rect x="344" y="246" width="2" height="11"/>
<rect x="344" y="423" width="2" height="11"/>
<rect x="344" y="600" width="2" height="4"/>
<rect x="365" y="76" width="2" height="4"/>
<rect x="365" y="246" width="2" height="11"/>
<rect x="365" y="423" width="2" height="11"/>
<rect x="365" y="600" width="2" height="4"/>
<rect x="385" y="76" width="2" height="9"/>
<rect x="385" y="242" width="2" height="20"/>
<rect x="385" y="418" width="2" height="20"/>
<rect x="385" y="595" width="2" height="9"/>
<rect x="406" y="76" width="2" height="4"/>
<rect x="406" y="246" width="2" height="11"/>
<rect x="406" y="423" width="2" height="11"/>
<rect x="406" y="600" width="2" height="4"/>
<rect x="427" y="76" width="2" height="4"/>
<rect x="427" y="246" width="2" height="11"/>
<rect x="427" y="423" width="2" height="11"/>
<rect x="427" y="600" width="2" height="4"/>
<rect x="448" y="76" width="2" height="4"/>
<rect x="448" y="246" width="2" height="11"/>
<rect x="448" y="423" width="2" height="11"/>
<rect x="448" y="600" width="2" height="4"/>
<rect x="468" y="76" width="2" height="4"/>
<rect x="468" y="246" width="2" height="11"/>
<rect x="468" y="423" width="2" height="11"/>
<rect x="468" y="600" width="2" height="4"/>
<rect x="489" y="76" width="2" height="9"/>
<rect x="489" y="242" width="2" height="20"/>
<rect x="489" y="418" width="2" height="20"/>
<rect x="489" y="595" width="2" height="9"/>
<rect x="510" y="76" width="2" height="4"/>
<rect x="510" y="246" width="2" height="11"/>
<rect x="510" y="423" width="2" height="11"/>
<rect x="510" y="600" width="2" height="4"/>
<rect x="531" y="76" width="2" height="4"/>
<rect x="531" y="246" width="2" height="11"/>
<rect x="531" y="423" width="2" height="11"/>
<rect x="531" y="600" width="2" height="4"/>
<rect x="551" y="76" width="2" height="4"/>
<rect x="551" y="246" width="2" height="11"/>
<rect x="551" y="423" width="2" height="11"/>
<rect x="551" y="600" width="2" height="4"/>
<rect x="572" y="76" width="2" height="4"/>
<rect x="572" y="246" width="2" height="11"/>
<rect x="572" y="423" width="2" height="11"/>
<rect x="572" y="600" width="2" height="4"/>
<rect x="593" y="76" width="2" height="9"/>
<rect x="593" y="242" width="2" height="20"/>
<rect x="593" y="418" width="2" height="20"/>
<rect x="593" y="595" width="2" height="9"/>
<rect x="614" y="76" width="2" height="4"/>
<rect x="614" y="246" width="2" height="11"/>
<rect x="614" y="423" width="2" height="11"/>
<rect x="614" y="600" width="2" height="4"/>
<rect x="634" y="76" width="2" height="4"/>
<rect x="634" y="246" width="2" height="11"/>
<rect x="634" y="423" width="2" height="11"/>
<rect x="634" y="600" width="2" height="4"/>
<rect x="655" y="76" width="2" height="4"/>
<rect x="655" y="246" width="2" height="11"/>
<rect x="655" y="423" width="2" height="11"/>
<rect x="655" y="600" width="2" height="4"/>
<rect x="676" y="76" width="2" height="4"/>
<rect x="676" y="246" width="2" height="11"/>
<rect x="676" y="423" width="2" height="11"/>
<rect x="676" y="600" width="2" height="4"/>
<rect x="697" y="76" width="2" height="9"/>
<rect x="697" y="242" width="2" height="20"/>
<rect x="697" y="418" width="2" height="20"/>
<rect x="697" y="595" width="2" height="9"/>
<rect x="717" y="76" width="2" height="4"/>
<rect x="717" y="246" width="2" height="11"/>
<rect x="717" y="423" width="2" height="11"/>
<rect x="717" y="600" width="2" height="4"/>
<rect x="738" y="76" width="2" height="4"/>
<rect x="738" y="246" width="2" height="11"/>
<rect x="738" y="423" width="2" height="11"/>
<rect x="738" y="600" width="2" height="4"/>
<rect x="759" y="76" width="2" height="4"/>
<rect x="759" y="246" width="2" height="11"/>
<rect x="759" y="423" width="2" height="11"/>
<rect x="759" y="600" width="2" height="4"/>
<rect x="76" y="204" width="9" height="2"/>
<rect x="765" y="204" width="9" height="2"/>
<rect x="76" y="158" width="9" height="2"/>
<rect x="765" y="158" width="9" height="2"/>
<rect x="76" y="112" width="9" height="2"/>
<rect x="765" y="112" width="9" height="2"/>
<rect x="76" y="380" width="9" height="2"/>
<rect x="765" y="380" width="9" height="2"/>
<rect x="76" y="334" width="9" height="2"/>
<rect x="765" y="334" width="9" height="2"/>
<rect x="76" y="288" width="9" height="2"/>
<rect x="765" y="288" width="9" height="2"/>
<rect x="76" y="442" width="9" height="2"/>
<rect x="765" y="442" width="9" height="2"/>
<rect x="76" y="457" width="4" height="2"/>
<rect x="770" y="457" width="4" height="2"/>
<rect x="76" y="471" width="4" height="2"/>
<rect x="770" y="471" width="4" height="2"/>
<rect x="76" y="486" width="4" height="2"/>
<rect x="770" y="486" width="4" height="2"/>
<rect x="76" y="501" width="4" height="2"/>
<rect x="770" y="501" width="4" height="2"/>
<rect x="76" y="516" width="9" height="2"/>
<rect x="765" y="516" width="9" height="2"/>
<rect x="76" y="530" width="4" height="2"/>
<rect x="770" y="530" width="4" height="2"/>
<rect x="76" y="545" width="4" height="2"/>
<rect x="770" y="545" width="4" height="2"/>
<rect x="76" y="560" width="4" height="2"/>
<rect x="770" y="560" width="4" height="2"/>
<rect x="76" y="574" width="4" height="2"/>
<rect x="770" y="574" width="4" height="2"/>
<rect x="76" y="589" width="9" height="2"/>
<rect x="765" y="589" width="9" height="2"/>
</g>
<g fill="#ff0000" shape-rendering="crispEdges">
<rect x="95" y="95" width="2" height="13"/>
<rect x="93" y="95" width="6" height="2"/>
<rect x="93" y="106" width="6" height="2"/>
<rect x="95" y="397" width="2" height="10"/>
<rect x="93" y="397" width="6" height="2"/>
<rect x="93" y="405" width="6" height="2"/>
<rect x="95" y="446" width="2" height="17"/>
<rect x="93" y="446" width="6" height="2"/>
<rect x="93" y="461" width="6" height="2"/>
</g>
<defs><filter id="crisp" x="0" y="0" width="850" height="680" filterUnits="userSpaceOnUse" color-interpolation-filters="sRGB"><feComponentTransfer><feFuncA type="discrete" tableValues="0 1"/></feComponentTransfer></filter></defs>
<g filter="url(#crisp)">
<text transform="translate(35.00,0) rotate(-90)" font-size="19" fill="#00ffff"><tspan x="-238.75" y="0">8</tspan> <tspan x="-219.50" y="0" textLength="33.33" lengthAdjust="spacingAndGlyphs">GHz</tspan> <tspan x="-175.00" y="0" textLength="42.83" lengthAdjust="spacingAndGlyphs">FLUX</tspan> <tspan x="-122.75" y="0" textLength="35.20" lengthAdjust="spacingAndGlyphs">(Jy)</tspan></text>
<text transform="translate(35.00,0) rotate(-90)" font-size="19" fill="#00ffff"><tspan x="-414.75" y="0">2</tspan> <tspan x="-395.50" y="0" textLength="33.33" lengthAdjust="spacingAndGlyphs">GHz</tspan> <tspan x="-351.00" y="0" textLength="42.83" lengthAdjust="spacingAndGlyphs">FLUX</tspan> <tspan x="-298.75" y="0" textLength="35.20" lengthAdjust="spacingAndGlyphs">(Jy)</tspan></text>
<text transform="translate(35.00,0) rotate(-90)" font-size="19" fill="#00ffff"><tspan x="-591.00" y="0" textLength="89.30" lengthAdjust="spacingAndGlyphs">SPECTRAL</tspan> <tspan x="-493.70" y="0" textLength="51.25" lengthAdjust="spacingAndGlyphs">INDEX</tspan></text>
<text x="377.20" y="39.00" font-size="19.5" fill="#00ffff" textLength="95.46" lengthAdjust="spacingAndGlyphs"><tspan font-family="IPAGothic,'Liberation Sans',sans-serif" font-size="20.1" dy="0.9">1</tspan><tspan dy="-0.9">5</tspan><tspan font-family="IPAGothic,'Liberation Sans',sans-serif" font-size="20.1" dy="0.9">11</tspan><tspan dy="-0.9">+238</tspan></text>
<text x="402.00" y="665.00" font-size="18.5" fill="#00ffff" textLength="44.99" lengthAdjust="spacingAndGlyphs">YEAR</text>
<text x="51.60" y="628.00" font-size="20" fill="#fff" textLength="47.08" lengthAdjust="spacingAndGlyphs"><tspan font-family="IPAGothic,'Liberation Sans',sans-serif" font-size="20.6" dy="0.9">1</tspan><tspan dy="-0.9">982</tspan></text>
<text x="155.20" y="628.00" font-size="20" fill="#fff" textLength="47.08" lengthAdjust="spacingAndGlyphs"><tspan font-family="IPAGothic,'Liberation Sans',sans-serif" font-size="20.6" dy="0.9">1</tspan><tspan dy="-0.9">984</tspan></text>
<text x="258.80" y="628.00" font-size="20" fill="#fff" textLength="47.08" lengthAdjust="spacingAndGlyphs"><tspan font-family="IPAGothic,'Liberation Sans',sans-serif" font-size="20.6" dy="0.9">1</tspan><tspan dy="-0.9">986</tspan></text>
<text x="362.40" y="628.00" font-size="20" fill="#fff" textLength="47.98" lengthAdjust="spacingAndGlyphs"><tspan font-family="IPAGothic,'Liberation Sans',sans-serif" font-size="20.6" dy="0.9">1</tspan><tspan dy="-0.9">988</tspan></text>
<text x="466.00" y="628.00" font-size="20" fill="#fff" textLength="48.16" lengthAdjust="spacingAndGlyphs"><tspan font-family="IPAGothic,'Liberation Sans',sans-serif" font-size="20.6" dy="0.9">1</tspan><tspan dy="-0.9">990</tspan></text>
<text x="570.60" y="628.00" font-size="20" fill="#fff" textLength="47.08" lengthAdjust="spacingAndGlyphs"><tspan font-family="IPAGothic,'Liberation Sans',sans-serif" font-size="20.6" dy="0.9">1</tspan><tspan dy="-0.9">992</tspan></text>
<text x="674.20" y="628.00" font-size="20" fill="#fff" textLength="47.08" lengthAdjust="spacingAndGlyphs"><tspan font-family="IPAGothic,'Liberation Sans',sans-serif" font-size="20.6" dy="0.9">1</tspan><tspan dy="-0.9">994</tspan></text>
<text transform="translate(63.00,127.00) rotate(-90)" font-size="20" fill="#fff" textLength="28.70" lengthAdjust="spacingAndGlyphs"><tspan font-family="IPAGothic,'Liberation Sans',sans-serif" font-size="20.6" dy="0.9">1</tspan><tspan dy="-0.9">.5</tspan></text>
<text transform="translate(63.00,164.50) rotate(-90)" font-size="20" fill="#fff"><tspan font-family="IPAGothic,'Liberation Sans',sans-serif" font-size="20.6" dy="0.9">1</tspan></text>
<text transform="translate(63.00,219.60) rotate(-90)" font-size="20" fill="#fff" textLength="28.42" lengthAdjust="spacingAndGlyphs">0.5</text>
<text transform="translate(63.00,257.70) rotate(-90)" font-size="20" fill="#fff">0</text>
<text transform="translate(63.00,303.00) rotate(-90)" font-size="20" fill="#fff" textLength="28.70" lengthAdjust="spacingAndGlyphs"><tspan font-family="IPAGothic,'Liberation Sans',sans-serif" font-size="20.6" dy="0.9">1</tspan><tspan dy="-0.9">.5</tspan></text>
<text transform="translate(63.00,340.50) rotate(-90)" font-size="20" fill="#fff"><tspan font-family="IPAGothic,'Liberation Sans',sans-serif" font-size="20.6" dy="0.9">1</tspan></text>
<text transform="translate(63.00,395.60) rotate(-90)" font-size="20" fill="#fff" textLength="28.42" lengthAdjust="spacingAndGlyphs">0.5</text>
<text transform="translate(63.00,433.70) rotate(-90)" font-size="20" fill="#fff">0</text>
<text transform="translate(63.00,448.00) rotate(-90)" font-size="20" fill="#fff"><tspan font-family="IPAGothic,'Liberation Sans',sans-serif" font-size="20.6" dy="0.9">1</tspan></text>
<text transform="translate(63.00,522.00) rotate(-90)" font-size="20" fill="#fff">0</text>
<text transform="translate(63.00,0) rotate(-90)" font-size="20" fill="#fff"><tspan x="-603" y="0.5" font-size="22" textLength="15" lengthAdjust="spacingAndGlyphs">−</tspan><tspan x="-587.20" y="0"><tspan font-family="IPAGothic,'Liberation Sans',sans-serif" font-size="20.6" dy="0.9">1</tspan></tspan></text>
</g>
</svg>
</body></html>
